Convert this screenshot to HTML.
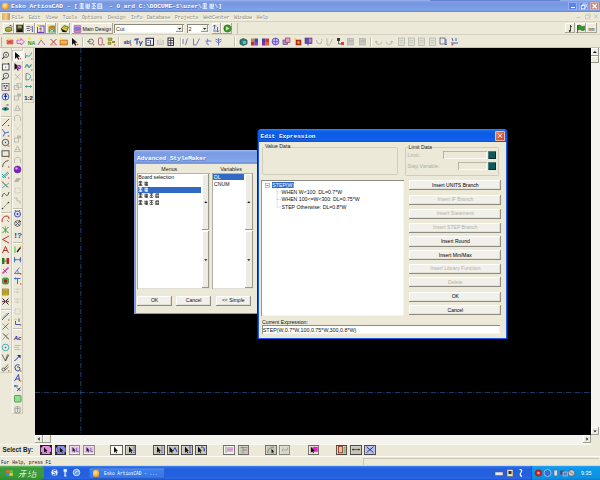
<!DOCTYPE html><html><head><meta charset="utf-8"><style>html,body{margin:0;padding:0;width:600px;height:480px;overflow:hidden;background:#ECE9D8}div,svg{position:absolute;box-sizing:border-box}</style></head><body>
<div style="left:0px;top:0px;width:600px;height:12px;background:linear-gradient(#9BB6F1 0px,#809EE4 1.5px,#7896E0 4px,#7A9FE6 8px,#7EA6EA 10px,#6F8AD2 11.5px,#6F8AD2 12px)"></div>
<div style="left:430px;top:0px;width:130px;height:1.3px;background:#6482D0"></div>
<div style="left:2px;top:2.5px;width:6.5px;height:6.5px;background:radial-gradient(circle at 40% 40%,#FFE9A8,#F0A830 60%,#C07010);border-radius:2px"></div>
<div style="left:11px;top:3.99px;font:bold 6.2px/6.82px 'Liberation Mono',monospace;color:#FFFFFF;white-space:pre;text-shadow:0.5px 0.5px 0 #5670B8">Esko ArtiosCAD - [</div>
<div style="left:109px;top:3.99px;font:bold 6.2px/6.82px 'Liberation Mono',monospace;color:#FFFFFF;white-space:pre;text-shadow:0.5px 0.5px 0 #5670B8">- 0 ard C:\DOCUME~1\uzer\</div>
<div style="left:214.5px;top:3.99px;font:bold 6.2px/6.82px 'Liberation Mono',monospace;color:#FFFFFF;white-space:pre;text-shadow:0.5px 0.5px 0 #5670B8">\]</div>
<svg style="left:78.5px;top:3.3000000000000003px;" width="5.6" height="5.8" viewBox="0 0 5.6 5.8"><path d="M0.5 2.03 H5.20 M2.80 0.3 V5.40 M0.8 3.94 H4.80 M0.5 5.40 H5.20 M0.8 0.6 H4.80" stroke="#FFFFFF" stroke-width="0.75" fill="none"/></svg>
<svg style="left:84.7px;top:3.3000000000000003px;" width="5.6" height="5.8" viewBox="0 0 5.6 5.8"><path d="M1 0.5 V5.40 M2.80 0.5 V5.40 M1 2.03 H5.20 M4.80 0.5 V3.94 M1 3.94 H5.20 M1.5 5.40 H4.80" stroke="#FFFFFF" stroke-width="0.75" fill="none"/></svg>
<svg style="left:90.9px;top:3.3000000000000003px;" width="5.6" height="5.8" viewBox="0 0 5.6 5.8"><path d="M0.5 0.6 H5.20 M2.80 0.6 V5.40 M0.5 3.94 L2.80 2.03 L5.20 3.94 M0.8 5.40 H4.80" stroke="#FFFFFF" stroke-width="0.75" fill="none"/></svg>
<svg style="left:97.1px;top:3.3000000000000003px;" width="5.6" height="5.8" viewBox="0 0 5.6 5.8"><path d="M0.8 0.8 V5.40 M0.8 0.8 H4.80 V5.40 M0.8 2.03 H4.80 M0.8 3.94 H4.80 M0.5 5.40 H5.20" stroke="#FFFFFF" stroke-width="0.75" fill="none"/></svg>
<svg style="left:202.3px;top:3.3000000000000003px;" width="5.6" height="5.8" viewBox="0 0 5.6 5.8"><path d="M0.5 2.03 H5.20 M2.80 0.3 V5.40 M0.8 3.94 H4.80 M0.5 5.40 H5.20 M0.8 0.6 H4.80" stroke="#FFFFFF" stroke-width="0.75" fill="none"/></svg>
<svg style="left:208.5px;top:3.3000000000000003px;" width="5.6" height="5.8" viewBox="0 0 5.6 5.8"><path d="M1 0.5 V5.40 M2.80 0.5 V5.40 M1 2.03 H5.20 M4.80 0.5 V3.94 M1 3.94 H5.20 M1.5 5.40 H4.80" stroke="#FFFFFF" stroke-width="0.75" fill="none"/></svg>
<div style="left:568px;top:1.7px;width:9.200000000000045px;height:8.3px;background:#5C84E8;border-radius:1.5px;box-shadow:inset 0 0 0 0.6px rgba(255,255,255,0.6)"></div>
<div style="left:578.7px;top:1.7px;width:9.200000000000045px;height:8.3px;background:#5C84E8;border-radius:1.5px;box-shadow:inset 0 0 0 0.6px rgba(255,255,255,0.6)"></div>
<div style="left:589.6px;top:1.7px;width:9.200000000000045px;height:8.3px;background:#C9867A;border-radius:1.5px;box-shadow:inset 0 0 0 0.6px rgba(255,255,255,0.6)"></div>
<div style="left:570.5px;top:7px;width:4.0px;height:1.1999999999999993px;background:#fff"></div>
<svg style="left:578.7px;top:1.7px;" width="9.2" height="8.3" viewBox="0 0 9.2 8.3"><rect x="2.3" y="3.6" width="3.6" height="3.2" fill="none" stroke="#fff" stroke-width="0.9"/><path d="M3.8 3.6 V2 H7.2 V5.2 H5.9" stroke="#fff" stroke-width="0.8" fill="none"/></svg>
<svg style="left:589.6px;top:1.7px;" width="9.2" height="8.3" viewBox="0 0 9.2 8.3"><path d="M2.5 2 L6.7 6.3 M6.7 2 L2.5 6.3" stroke="#fff" stroke-width="1.3"/></svg>
<div style="left:0px;top:12px;width:600px;height:9px;background:#ECE9D8"></div>
<div style="left:2px;top:13px;width:7.5px;height:7px;background:linear-gradient(90deg,#D8B060,#F0D090,#C89040);border-radius:1px"></div>
<div style="left:11.7px;top:16.29px;font:normal 5.3px/5.83px 'Liberation Mono',monospace;color:#8E8C80;white-space:pre;text-shadow:0.6px 0.6px 0 #FFFFFF;letter-spacing:-0.25px">File</div>
<div style="left:28.7px;top:16.29px;font:normal 5.3px/5.83px 'Liberation Mono',monospace;color:#8E8C80;white-space:pre;text-shadow:0.6px 0.6px 0 #FFFFFF;letter-spacing:-0.25px">Edit</div>
<div style="left:45.7px;top:16.29px;font:normal 5.3px/5.83px 'Liberation Mono',monospace;color:#8E8C80;white-space:pre;text-shadow:0.6px 0.6px 0 #FFFFFF;letter-spacing:-0.25px">View</div>
<div style="left:62.5px;top:16.29px;font:normal 5.3px/5.83px 'Liberation Mono',monospace;color:#8E8C80;white-space:pre;text-shadow:0.6px 0.6px 0 #FFFFFF;letter-spacing:-0.25px">Tools</div>
<div style="left:81.7px;top:16.29px;font:normal 5.3px/5.83px 'Liberation Mono',monospace;color:#8E8C80;white-space:pre;text-shadow:0.6px 0.6px 0 #FFFFFF;letter-spacing:-0.25px">Options</div>
<div style="left:107.8px;top:16.29px;font:normal 5.3px/5.83px 'Liberation Mono',monospace;color:#8E8C80;white-space:pre;text-shadow:0.6px 0.6px 0 #FFFFFF;letter-spacing:-0.25px">Design</div>
<div style="left:130.7px;top:16.29px;font:normal 5.3px/5.83px 'Liberation Mono',monospace;color:#8E8C80;white-space:pre;text-shadow:0.6px 0.6px 0 #FFFFFF;letter-spacing:-0.25px">Info</div>
<div style="left:146.7px;top:16.29px;font:normal 5.3px/5.83px 'Liberation Mono',monospace;color:#8E8C80;white-space:pre;text-shadow:0.6px 0.6px 0 #FFFFFF;letter-spacing:-0.25px">Database</div>
<div style="left:174.7px;top:16.29px;font:normal 5.3px/5.83px 'Liberation Mono',monospace;color:#8E8C80;white-space:pre;text-shadow:0.6px 0.6px 0 #FFFFFF;letter-spacing:-0.25px">Projects</div>
<div style="left:203.2px;top:16.29px;font:normal 5.3px/5.83px 'Liberation Mono',monospace;color:#8E8C80;white-space:pre;text-shadow:0.6px 0.6px 0 #FFFFFF;letter-spacing:-0.25px">WebCenter</div>
<div style="left:234px;top:16.29px;font:normal 5.3px/5.83px 'Liberation Mono',monospace;color:#8E8C80;white-space:pre;text-shadow:0.6px 0.6px 0 #FFFFFF;letter-spacing:-0.25px">Window</div>
<div style="left:256.5px;top:16.29px;font:normal 5.3px/5.83px 'Liberation Mono',monospace;color:#8E8C80;white-space:pre;text-shadow:0.6px 0.6px 0 #FFFFFF;letter-spacing:-0.25px">Help</div>
<svg style="left:574px;top:12px;" width="26" height="9" viewBox="0 0 26 9"><path d="M2.8 5.5 H6.3" stroke="#C2C0B4" stroke-width="0.9"/><rect x="11.5" y="3.2" width="3.6" height="3.6" fill="none" stroke="#CAC8BC" stroke-width="0.8"/><path d="M12.8 3.2 V2 H16.3 V5.5 H15.1" stroke="#CAC8BC" stroke-width="0.7" fill="none"/><path d="M20.3 2.6 L23.7 6.2 M23.7 2.6 L20.3 6.2" stroke="#C2C0B4" stroke-width="0.9"/></svg>
<div style="left:0px;top:20.5px;width:600px;height:0.6999999999999993px;background:#D6D2C2"></div>
<div style="left:0px;top:34.3px;width:600px;height:0.7000000000000028px;background:#D6D2C2"></div>
<div style="left:0px;top:47.3px;width:600px;height:0.7000000000000028px;background:#C8C4B4"></div>
<div style="left:1.5px;top:22px;width:55.5px;height:12px;background:#EFEDE3"></div>
<div style="left:3.0px;top:22.6px;width:10.6px;height:11.0px;box-shadow:inset -1px -1px 0 #A8A596, inset 1px 1px 0 #FFFFFF;background:#EEEBDD"></div>
<svg style="left:4.0px;top:23.6px;" width="9" height="9" viewBox="0 0 9 9"><path d="M1.5 4 Q4 2 7.5 3.5 L8 6.5 Q5 8.5 1.5 7 Z" fill="#9AA038" stroke="#4E5410" stroke-width="0.6"/><path d="M2.5 5 Q4.5 4 7 5" stroke="#C8D070" stroke-width="0.8" fill="none"/><path d="M5.5 1.5 Q7.5 1 8.3 2.8" stroke="#222" stroke-width="0.7" fill="none"/></svg>
<div style="left:13.7px;top:22.6px;width:10.599999999999998px;height:11.0px;box-shadow:inset -1px -1px 0 #A8A596, inset 1px 1px 0 #FFFFFF;background:#EEEBDD"></div>
<svg style="left:14.7px;top:23.6px;" width="9" height="9" viewBox="0 0 9 9"><rect x="1.5" y="1" width="6.5" height="7" fill="#3E3C18" stroke="#222" stroke-width="0.5"/><rect x="2.7" y="1.5" width="4" height="2.8" fill="#9CA060"/><rect x="2.5" y="6" width="4.5" height="2" fill="#111"/></svg>
<div style="left:24.4px;top:22.6px;width:10.600000000000001px;height:11.0px;box-shadow:inset -1px -1px 0 #A8A596, inset 1px 1px 0 #FFFFFF;background:#EEEBDD"></div>
<svg style="left:25.4px;top:23.6px;" width="9" height="9" viewBox="0 0 9 9"><path d="M1.5 2.5 H5 M1.5 4.5 H4.5 M2 6.5 H5" stroke="#606070" stroke-width="0.9"/><path d="M6 2.5 V4 M6 5 V6" stroke="#505060" stroke-width="0.8"/><path d="M7.5 2 V7.5" stroke="#3A4AA8" stroke-width="0.7"/><path d="M6.5 6.8 L7.5 8 L8.5 6.8" fill="#3A4AA8"/></svg>
<div style="left:35.099999999999994px;top:22.6px;width:10.600000000000001px;height:11.0px;box-shadow:inset -1px -1px 0 #A8A596, inset 1px 1px 0 #FFFFFF;background:#EEEBDD"></div>
<svg style="left:36.099999999999994px;top:23.6px;" width="9" height="9" viewBox="0 0 9 9"><rect x="1.5" y="2" width="6.5" height="6.5" fill="#F0E8F8" stroke="#7040C0" stroke-width="1"/><circle cx="2.2" cy="1.8" r="1.5" fill="#F0E040"/><circle cx="4.6" cy="4.8" r="1.3" fill="#A07840"/><path d="M3 7.5 Q4.6 5.5 6.5 7.5" fill="#806030"/></svg>
<div style="left:45.8px;top:22.6px;width:10.600000000000001px;height:11.0px;box-shadow:inset -1px -1px 0 #A8A596, inset 1px 1px 0 #FFFFFF;background:#EEEBDD"></div>
<svg style="left:46.8px;top:23.6px;" width="9" height="9" viewBox="0 0 9 9"><rect x="1.5" y="1.5" width="6.5" height="3.5" fill="#C09040"/><rect x="1.5" y="5" width="6.5" height="3.5" fill="#50A070"/><path d="M3 5.5 L6.5 8 M6.5 5.5 L3 8" stroke="#E0F0E0" stroke-width="0.8"/><circle cx="1.8" cy="1.8" r="1.4" fill="#F8E850"/><path d="M1.5 3 H8" stroke="#806020" stroke-width="0.5"/></svg>
<div style="left:56.5px;top:23px;width:0.7999999999999972px;height:10.5px;background:#C4C0AE"></div>
<div style="left:59.2px;top:22.6px;width:10.599999999999994px;height:11.0px;box-shadow:inset -1px -1px 0 #A8A596, inset 1px 1px 0 #FFFFFF;background:#EEEBDD"></div>
<svg style="left:60.2px;top:23.6px;" width="9" height="9" viewBox="0 0 9 9"><path d="M1 5 L4 1.5 L8.5 3 L6.5 7.5 Z" fill="#D8D030" stroke="#202010" stroke-width="0.6"/><path d="M1 5 L2.5 8 L6.5 8.3 L6.5 7.5 Z" fill="#111"/><path d="M3.5 3.5 L6.8 4.5" stroke="#807010" stroke-width="0.5"/></svg>
<div style="left:71.5px;top:22.6px;width:41.099999999999994px;height:11.0px;box-shadow:inset -1px -1px 0 #A8A596, inset 1px 1px 0 #FFFFFF;background:#EEEBDD"></div>
<svg style="left:72.5px;top:23.8px;" width="9" height="9" viewBox="0 0 9 9"><rect x="1" y="1.5" width="7" height="2" rx="0.8" fill="#D890E0" stroke="#8040A0" stroke-width="0.5"/><rect x="1" y="4" width="7" height="2" rx="0.8" fill="#9090F0" stroke="#4040A0" stroke-width="0.5"/><rect x="1" y="6.5" width="7" height="2" rx="0.8" fill="#E080C0" stroke="#8040A0" stroke-width="0.5"/></svg>
<div style="left:82.4px;top:26.74px;font:normal 5.2px/5.72px 'Liberation Sans',sans-serif;color:#111;white-space:pre;">Main Design</div>
<div style="left:113.9px;top:24.2px;width:69.9px;height:9.000000000000004px;background:#fff;box-shadow:inset 1px 1px 0 #8A887C, inset -0.8px -0.8px 0 #F4F3EE"></div>
<div style="left:116px;top:26.83px;font:normal 5.4px/5.94px 'Liberation Sans',sans-serif;color:#222;white-space:pre;">Cut</div>
<div style="left:176px;top:25px;width:7.300000000000011px;height:7.299999999999997px;background:#EEEDE5;box-shadow:inset -1px -1px 0 #9C9A8C, inset 1px 1px 0 #FFFFFF;"></div>
<svg style="left:176px;top:25px;" width="7.3" height="7.3" viewBox="0 0 7.3 7.3"><path d="M2 3 H5.3 L3.65 4.8 Z" fill="#222"/></svg>
<div style="left:186.9px;top:24.2px;width:21.799999999999983px;height:9.000000000000004px;background:#fff;box-shadow:inset 1px 1px 0 #8A887C, inset -0.8px -0.8px 0 #F4F3EE"></div>
<div style="left:188.5px;top:26.83px;font:normal 5.4px/5.94px 'Liberation Sans',sans-serif;color:#222;white-space:pre;">2</div>
<div style="left:201px;top:25px;width:7.199999999999989px;height:7.299999999999997px;background:#EEEDE5;box-shadow:inset -1px -1px 0 #9C9A8C, inset 1px 1px 0 #FFFFFF;"></div>
<svg style="left:201px;top:25px;" width="7.3" height="7.3" viewBox="0 0 7.3 7.3"><path d="M2 3 H5.3 L3.65 4.8 Z" fill="#222"/></svg>
<div style="left:211.6px;top:22.6px;width:9.099999999999994px;height:11.0px;box-shadow:inset -1px -1px 0 #A8A596, inset 1px 1px 0 #FFFFFF;background:#EEEBDD"></div>
<svg style="left:211.8px;top:23.6px;" width="9" height="9" viewBox="0 0 9 9"><path d="M2.5 1 V5 M1 2.5 L2.5 1 L4 2.5" stroke="#2850B0" stroke-width="0.8" fill="none"/><path d="M5.5 3 V8 M4 6.5 L5.5 8 L7 6.5" stroke="#2850B0" stroke-width="0.8" fill="none"/><rect x="1" y="5.5" width="3" height="2.5" fill="#B0B0B0"/></svg>
<div style="left:221.4px;top:22.6px;width:11.099999999999994px;height:11.0px;box-shadow:inset -1px -1px 0 #A8A596, inset 1px 1px 0 #FFFFFF;background:#EEEBDD"></div>
<svg style="left:222.5px;top:23.6px;" width="9" height="9" viewBox="0 0 9 9"><circle cx="4.5" cy="4.5" r="3.6" fill="#3A9A30" stroke="#1E5A18" stroke-width="0.6"/><path d="M3 2.5 L6.5 4.5 L3 6.5 Z" fill="#D0F0A0"/></svg>
<div style="left:236.5px;top:23px;width:0.8000000000000114px;height:10.5px;background:#C4C0AE"></div>
<div style="left:565.0px;top:23.4px;width:10.399999999999977px;height:9.800000000000004px;box-shadow:inset -1px -1px 0 #A8A596, inset 1px 1px 0 #FFFFFF;background:#EEEBDD"></div>
<svg style="left:565.8px;top:23.8px;" width="9" height="9" viewBox="0 0 9 9"><path d="M4.5 1 V7" stroke="#333" stroke-width="0.9"/><path d="M4.5 1.5 L6 3" stroke="#333" stroke-width="0.7"/><circle cx="3.8" cy="7" r="1" fill="#333"/></svg>
<div style="left:575.6px;top:23.4px;width:10.399999999999977px;height:9.800000000000004px;box-shadow:inset -1px -1px 0 #A8A596, inset 1px 1px 0 #FFFFFF;background:#EEEBDD"></div>
<svg style="left:576.4px;top:23.8px;" width="9" height="9" viewBox="0 0 9 9"><path d="M1.5 8.5 V1" stroke="#143" stroke-width="0.8"/><path d="M1.8 1.5 Q4 0.5 5 2 Q6.5 3 8.5 2 V6 Q6.5 7 5 6 Q3.5 5 1.8 6 Z" fill="#2E9A22" stroke="#185010" stroke-width="0.5"/></svg>
<div style="left:586.2px;top:23.4px;width:10.399999999999977px;height:9.800000000000004px;box-shadow:inset -1px -1px 0 #A8A596, inset 1px 1px 0 #FFFFFF;background:#EEEBDD"></div>
<svg style="left:587.0px;top:23.8px;" width="9" height="9" viewBox="0 0 9 9"><text x="4.5" y="6.5" font-family="Liberation Mono" font-size="5" text-anchor="middle" fill="#444">mm</text></svg>
<div style="left:0.8px;top:36.5px;width:0.8px;height:10.0px;background:#B8B4A4"></div>
<svg style="left:5.5px;top:37px;" width="9" height="9" viewBox="0 0 9 9"><path d="M1 3 H7 V7 H1 Z" fill="#F08080" stroke="#C02020" stroke-width="0.5"/><circle cx="2.5" cy="2" r="1.4" fill="#F8E050"/><path d="M2 5 H6" stroke="#A00" stroke-width="0.8"/></svg>
<svg style="left:16.3px;top:37px;" width="9" height="9" viewBox="0 0 9 9"><path d="M1 3 H5 L5 1.5 L8.5 5 L5 8 V6.5 H1 Z" fill="#F0D0F0" stroke="#B040B0" stroke-width="0.7"/><circle cx="2.5" cy="2" r="1.3" fill="#F8E050"/></svg>
<svg style="left:26.8px;top:37px;" width="9" height="9" viewBox="0 0 9 9"><circle cx="2.5" cy="1.8" r="1.3" fill="#F8E050"/><text x="4.5" y="8" font-family="Liberation Sans" font-weight="bold" font-size="5.3" text-anchor="middle" fill="#20A020">NA</text></svg>
<svg style="left:37.2px;top:37px;" width="9" height="9" viewBox="0 0 9 9"><path d="M1 8 L4 3 L8 8" stroke="#9040A0" stroke-width="0.8" fill="none"/><circle cx="4" cy="2" r="1.4" fill="#F8E050"/></svg>
<svg style="left:48.5px;top:37px;" width="9" height="9" viewBox="0 0 9 9"><path d="M1.5 2 L7.5 8 M7.5 2 L1.5 8" stroke="#D03030" stroke-width="1"/><path d="M1 8 H8" stroke="#E08080" stroke-width="0.6"/></svg>
<svg style="left:59.3px;top:37px;" width="9" height="9" viewBox="0 0 9 9"><rect x="1" y="3" width="7.5" height="5" fill="#F0A030" stroke="#905010" stroke-width="0.5"/><path d="M1.5 5 H8" stroke="#fff" stroke-width="0.5"/><circle cx="2" cy="2" r="1.3" fill="#F8E050"/></svg>
<svg style="left:69.7px;top:37px;" width="9" height="9" viewBox="0 0 9 9"><path d="M2 1 L2 8 L3.8 6.2 L5.2 8.8 L6.3 8.2 L5 5.8 L7.3 5.6 Z" fill="#111"/><circle cx="7.5" cy="7.5" r="0.8" fill="#E04030"/></svg>
<svg style="left:85.5px;top:37px;" width="9" height="9" viewBox="0 0 9 9"><circle cx="5" cy="4.5" r="2.4" fill="none" stroke="#555" stroke-width="0.8"/><path d="M1 4.5 H5" stroke="#C03030" stroke-width="0.7"/><circle cx="7.5" cy="7.8" r="0.8" fill="#E04030"/></svg>
<svg style="left:96.3px;top:37px;" width="9" height="9" viewBox="0 0 9 9"><rect x="2.5" y="1" width="3.8" height="7" rx="1.2" fill="#F4E0E0" stroke="#905050" stroke-width="0.8"/><circle cx="7.8" cy="7.8" r="0.8" fill="#E04030"/></svg>
<svg style="left:107.2px;top:37px;" width="9" height="9" viewBox="0 0 9 9"><rect x="1" y="1" width="4" height="2.5" fill="#B0B040" stroke="#606010" stroke-width="0.4"/><rect x="1" y="5" width="3" height="2.5" fill="#B0B040" stroke="#606010" stroke-width="0.4"/><rect x="5" y="4" width="3" height="2" fill="#909030"/><circle cx="7.8" cy="8" r="0.8" fill="#E04030"/></svg>
<svg style="left:123.0px;top:37px;" width="9" height="9" viewBox="0 0 9 9"><text x="4.3" y="7" font-family="Liberation Sans" font-weight="bold" font-size="5" text-anchor="middle" fill="#2030A0">abl</text><circle cx="7.8" cy="8" r="0.8" fill="#E04030"/></svg>
<svg style="left:133.8px;top:37px;" width="9" height="9" viewBox="0 0 9 9"><path d="M1 2 H5 M3 2 V7.5 M1 2 V3.5" stroke="#2030B0" stroke-width="1.1" fill="none"/><path d="M5 4 L6.5 7 M8.5 4 L6 9" stroke="#2030B0" stroke-width="1" fill="none"/></svg>
<svg style="left:144.7px;top:37px;" width="9" height="9" viewBox="0 0 9 9"><rect x="1" y="1.3" width="7.5" height="7" fill="#F0F0F8" stroke="#202040" stroke-width="1"/><path d="M2.2 3.3 H4.5 M5.5 3 V7.5" stroke="#202040" stroke-width="0.8"/><path d="M2.2 5.5 H4.5" stroke="#6070C0" stroke-width="0.7"/></svg>
<svg style="left:155.5px;top:37px;" width="9" height="9" viewBox="0 0 9 9"><rect x="1.5" y="3.5" width="6" height="4" fill="#D8D8D0" stroke="#B0B0A8" stroke-width="0.5"/><rect x="3" y="1" width="3" height="3" fill="#E0E0D8"/></svg>
<svg style="left:166.3px;top:37px;" width="9" height="9" viewBox="0 0 9 9"><rect x="2" y="1" width="5.5" height="7.5" fill="#F0F0F8" stroke="#202030" stroke-width="0.9"/><path d="M2.5 3.5 H7 M2.5 6 H7 M4.7 1.5 V8" stroke="#202030" stroke-width="0.8"/></svg>
<svg style="left:180.5px;top:37px;" width="9" height="9" viewBox="0 0 9 9"><path d="M2 2 V7 M6.5 1.5 L4.5 8" stroke="#5060C8" stroke-width="0.8"/></svg>
<svg style="left:192.2px;top:37px;" width="9" height="9" viewBox="0 0 9 9"><path d="M1.5 1.5 V8 H4.5 M7.5 1.5 L4.5 7.5" stroke="#5060C8" stroke-width="0.8" fill="none"/></svg>
<svg style="left:203.8px;top:37px;" width="9" height="9" viewBox="0 0 9 9"><path d="M1.5 4 H7.5 M3 1.5 Q5 3 3 5 Q1.5 7 5 8" stroke="#5060C8" stroke-width="0.8" fill="none"/></svg>
<svg style="left:213.8px;top:37px;" width="9" height="9" viewBox="0 0 9 9"><path d="M4.5 1 V8.5 M1.5 2 Q4.5 5 7.5 2 M1.5 4 L4.5 6 L7.5 4" stroke="#5060C8" stroke-width="0.8" fill="none"/></svg>
<svg style="left:238.8px;top:37px;" width="9" height="9" viewBox="0 0 9 9"><path d="M1 3 L4 1.5 L8 3 V7 L4 8.5 L1 7 Z" fill="#308080" stroke="#103838" stroke-width="0.6"/><rect x="4" y="4" width="3" height="3" fill="#60C0C0"/></svg>
<svg style="left:249.7px;top:37px;" width="9" height="9" viewBox="0 0 9 9"><rect x="1" y="1.5" width="3.5" height="3.5" fill="#E08020"/><rect x="4.5" y="1.5" width="3.5" height="3.5" fill="#3050C0"/><rect x="1" y="5" width="3.5" height="3.5" fill="#C03030"/><rect x="4.5" y="5" width="3.5" height="3.5" fill="#8050C0"/></svg>
<svg style="left:260.5px;top:37px;" width="9" height="9" viewBox="0 0 9 9"><rect x="1" y="1.5" width="3.5" height="3.5" fill="#4040A0"/><rect x="4.5" y="1.5" width="3.5" height="3.5" fill="#D03040"/><rect x="1" y="5" width="3.5" height="3.5" fill="#8030A0"/><rect x="4.5" y="5" width="3.5" height="3.5" fill="#E06040"/></svg>
<svg style="left:271.3px;top:37px;" width="9" height="9" viewBox="0 0 9 9"><circle cx="4.5" cy="4.5" r="3.4" fill="#C0B0F0" stroke="#4030A0" stroke-width="0.7"/><path d="M1.5 4.5 H7.5 M4.5 1.2 V7.8" stroke="#4030A0" stroke-width="0.5"/></svg>
<svg style="left:282.2px;top:37px;" width="9" height="9" viewBox="0 0 9 9"><rect x="1" y="3" width="4.5" height="4.5" fill="#B090D0" stroke="#503070" stroke-width="0.6"/><rect x="3.5" y="1" width="4.5" height="4.5" fill="#E0A0C0" stroke="#803060" stroke-width="0.6"/></svg>
<svg style="left:293.0px;top:37px;" width="9" height="9" viewBox="0 0 9 9"><circle cx="2" cy="2" r="1.3" fill="#F0E060"/><rect x="3" y="3" width="5" height="5" fill="#D03020" stroke="#602010" stroke-width="0.5"/><rect x="4.5" y="4.5" width="2" height="2" fill="#F0C020"/></svg>
<svg style="left:303.8px;top:37px;" width="9" height="9" viewBox="0 0 9 9"><rect x="1" y="1" width="7" height="5.5" fill="#6050B0" stroke="#302060" stroke-width="0.5"/><rect x="5" y="1.5" width="2.5" height="4" fill="#E070C0"/><path d="M4 6.5 V8.5" stroke="#302060" stroke-width="0.8"/></svg>
<svg style="left:314.7px;top:37px;" width="9" height="9" viewBox="0 0 9 9"><path d="M1.5 3 Q1.5 7 4.5 7 Q7 7 6.5 4 M6 2 L7.5 3.5" stroke="#A8A8A0" stroke-width="0.8" fill="none"/></svg>
<svg style="left:324.5px;top:37px;" width="9" height="9" viewBox="0 0 9 9"><path d="M2 1.5 V8 H5 M7.5 2 L5 7" stroke="#A8A8A0" stroke-width="0.8" fill="none"/></svg>
<svg style="left:335.5px;top:37px;" width="9" height="9" viewBox="0 0 9 9"><rect x="1" y="1" width="3" height="3" fill="#333"/><path d="M2.5 4 V7 H6" stroke="#333" stroke-width="0.7" fill="none"/><rect x="5" y="5" width="3" height="3" fill="#E04040"/></svg>
<svg style="left:346.3px;top:37px;" width="9" height="9" viewBox="0 0 9 9"><rect x="1.5" y="1.5" width="6" height="6.5" fill="#C8C8C0" stroke="#A8A8A0" stroke-width="0.6"/><path d="M2.5 4 H7" stroke="#999" stroke-width="0.6"/></svg>
<svg style="left:357.5px;top:37px;" width="9" height="9" viewBox="0 0 9 9"><rect x="1.5" y="1.5" width="6" height="6.5" fill="#C8C8C0" stroke="#A8A8A0" stroke-width="0.6"/><path d="M2.5 4 H7" stroke="#999" stroke-width="0.6"/></svg>
<svg style="left:373.9px;top:37px;" width="9" height="9" viewBox="0 0 9 9"><path d="M2 4 Q2 7.5 5 7.5 Q8 7.5 8 4.5 M2 4 L1 5.5 M2 4 L3.5 5" stroke="#B0B0A8" stroke-width="0.8" fill="none"/></svg>
<svg style="left:384.9px;top:37px;" width="9" height="9" viewBox="0 0 9 9"><path d="M7 4 Q7 7.5 4 7.5 Q1 7.5 1 4.5 M7 4 L8 5.5 M7 4 L5.5 5" stroke="#B0B0A8" stroke-width="0.8" fill="none"/></svg>
<svg style="left:396.5px;top:37px;" width="9" height="9" viewBox="0 0 9 9"><rect x="1.5" y="1" width="6" height="7.5" fill="#E0E0D8" stroke="#A8A8A0" stroke-width="0.6"/><path d="M2.5 3.5 H6.5 M2.5 5.5 H6.5" stroke="#B0B0A8" stroke-width="0.5"/></svg>
<svg style="left:407.0px;top:37px;" width="9" height="9" viewBox="0 0 9 9"><rect x="1.5" y="1" width="6" height="7.5" fill="#E0E0D8" stroke="#A8A8A0" stroke-width="0.6"/><path d="M2.5 3.5 H6.5 M2.5 5.5 H6.5" stroke="#B0B0A8" stroke-width="0.5"/></svg>
<svg style="left:417.0px;top:37px;" width="9" height="9" viewBox="0 0 9 9"><rect x="1.5" y="1" width="6" height="7.5" fill="#E0E0D8" stroke="#A8A8A0" stroke-width="0.6"/><path d="M2.5 3.5 H6.5 M2.5 5.5 H6.5" stroke="#B0B0A8" stroke-width="0.5"/></svg>
<svg style="left:428.1px;top:37px;" width="9" height="9" viewBox="0 0 9 9"><rect x="1.5" y="1" width="6" height="7.5" fill="#E0E0D8" stroke="#A8A8A0" stroke-width="0.6"/><path d="M2.5 3.5 H6.5 M2.5 5.5 H6.5" stroke="#B0B0A8" stroke-width="0.5"/></svg>
<svg style="left:439.1px;top:37px;" width="9" height="9" viewBox="0 0 9 9"><rect x="1" y="1" width="5" height="6" fill="#E8E8F0" stroke="#303050" stroke-width="0.6"/><path d="M7 2 V8 M6 7 L7 8 L8 7" stroke="#2040A0" stroke-width="0.7" fill="none"/></svg>
<svg style="left:450.1px;top:37px;" width="9" height="9" viewBox="0 0 9 9"><path d="M2 1 L3 4 M6 1 V4 M1 6 H8" stroke="#2040A0" stroke-width="0.8"/><circle cx="2.5" cy="7.5" r="1" fill="#E04040"/></svg>
<div style="left:82px;top:36.5px;width:0.7999999999999972px;height:10.0px;background:#C4C0AE"></div>
<div style="left:82.8px;top:36.5px;width:0.6000000000000085px;height:10.0px;background:#FFFFFF"></div>
<div style="left:118.3px;top:36.5px;width:0.7999999999999972px;height:10.0px;background:#C4C0AE"></div>
<div style="left:119.1px;top:36.5px;width:0.6000000000000085px;height:10.0px;background:#FFFFFF"></div>
<div style="left:180px;top:36.5px;width:0.8000000000000114px;height:10.0px;background:#C4C0AE"></div>
<div style="left:180.8px;top:36.5px;width:0.5999999999999943px;height:10.0px;background:#FFFFFF"></div>
<div style="left:234.2px;top:36.5px;width:0.8000000000000114px;height:10.0px;background:#C4C0AE"></div>
<div style="left:235.0px;top:36.5px;width:0.5999999999999943px;height:10.0px;background:#FFFFFF"></div>
<div style="left:370px;top:36.5px;width:0.8000000000000114px;height:10.0px;background:#C4C0AE"></div>
<div style="left:370.8px;top:36.5px;width:0.5999999999999659px;height:10.0px;background:#FFFFFF"></div>
<div style="left:34.7px;top:47.6px;width:556.3px;height:387.4px;background:#000"></div>
<svg style="left:34.7px;top:47.6px" width="556.3" height="387.4" viewBox="0 0 556.3 387.4"><path d="M45.8 0 V387.4" stroke="#2E5A94" stroke-width="0.7" stroke-dasharray="5 1.5 1 1.5"/><path d="M0 344.6 H556.3" stroke="#2E5A94" stroke-width="0.7" stroke-dasharray="5 1.5 1 1.5"/></svg>
<div style="left:591px;top:47.6px;width:9px;height:387.4px;background:#F4F3EE"></div>
<div style="left:591.3px;top:47.8px;width:7.7000000000000455px;height:7.800000000000004px;background:#ECEBE4;box-shadow:inset -1px -1px 0 #9A988A, inset 1px 1px 0 #FFFFFF;"></div>
<svg style="left:591.3px;top:47.8px;" width="7.7" height="7.8" viewBox="0 0 7.7 7.8"><path d="M1.9 4.9 H5.8 L3.85 3 Z" fill="#111"/></svg>
<div style="left:591.3px;top:55.6px;width:7.7000000000000455px;height:7.899999999999999px;background:#ECEBE4;box-shadow:inset -1px -1px 0 #9A988A, inset 1px 1px 0 #FFFFFF;"></div>
<div style="left:591.3px;top:426.5px;width:8.0px;height:8.5px;background:#ECEBE4;box-shadow:inset -1px -1px 0 #A09E90, inset 1px 1px 0 #FFFFFF;"></div>
<svg style="left:591.3px;top:426.5px;" width="8" height="8.5" viewBox="0 0 8 8.5"><path d="M2.3 3.5 H5.7 L4 5.3 Z" fill="#111"/></svg>
<div style="left:34.7px;top:435px;width:556.3px;height:8.5px;background:#F4F3EE"></div>
<div style="left:35px;top:435.3px;width:7.5px;height:8.0px;background:#ECEBE4;box-shadow:inset -1px -1px 0 #A09E90, inset 1px 1px 0 #FFFFFF;"></div>
<svg style="left:35px;top:435.3px;" width="7.5" height="8" viewBox="0 0 7.5 8"><path d="M4.6 2.3 V5.7 L2.8 4 Z" fill="#111"/></svg>
<div style="left:42.5px;top:435.3px;width:8.200000000000003px;height:8.0px;background:#ECEBE4;box-shadow:inset -1px -1px 0 #A09E90, inset 1px 1px 0 #FFFFFF;"></div>
<div style="left:583px;top:435.3px;width:8px;height:8.0px;background:#ECEBE4;box-shadow:inset -1px -1px 0 #A09E90, inset 1px 1px 0 #FFFFFF;"></div>
<svg style="left:583px;top:435.3px;" width="8" height="8" viewBox="0 0 8 8"><path d="M3.4 2.3 V5.7 L5.2 4 Z" fill="#111"/></svg>
<div style="left:0px;top:48px;width:11.5px;height:324.5px;box-shadow:inset -0.6px -0.6px 0 #B8B4A4, inset 0.6px 0 0 #fff"></div>
<div style="left:11.8px;top:48px;width:11.2px;height:366px;box-shadow:inset -0.6px -0.6px 0 #B8B4A4, inset 0.6px 0 0 #fff"></div>
<div style="left:23.2px;top:48px;width:11.3px;height:54.5px;box-shadow:inset -0.6px -0.6px 0 #B8B4A4, inset 0.6px 0 0 #fff"></div>
<svg style="left:1.4000000000000004px;top:50.9px;" width="9" height="9" viewBox="0 0 9 9"><circle cx="5" cy="3.8" r="2.6" fill="#F8F8F8" stroke="#333" stroke-width="0.8"/><path d="M3.2 5.8 L1.2 8" stroke="#333" stroke-width="1.1"/><path d="M3.9 3.8 H6.1 M5 2.7 V4.9" stroke="#333" stroke-width="0.5"/></svg>
<svg style="left:1.4000000000000004px;top:61.5px;" width="9" height="9" viewBox="0 0 9 9"><rect x="1.5" y="2" width="6.5" height="6" fill="#F4F4F4" stroke="#333" stroke-width="0.8"/><circle cx="4.7" cy="5" r="0.6" fill="#333"/><circle cx="7.5" cy="1.8" r="0.7" fill="#333"/></svg>
<svg style="left:1.4000000000000004px;top:71.5px;" width="9" height="9" viewBox="0 0 9 9"><circle cx="5" cy="3.8" r="2.6" fill="#F8F8F8" stroke="#333" stroke-width="0.8"/><path d="M3.2 5.8 L1.2 8" stroke="#333" stroke-width="1.1"/><path d="M3.9 3.8 H6.1" stroke="#333" stroke-width="0.5"/></svg>
<svg style="left:1.4000000000000004px;top:81.8px;" width="9" height="9" viewBox="0 0 9 9"><rect x="1" y="1.5" width="7" height="7" fill="#E8E8E8" stroke="#444" stroke-width="0.6"/><rect x="2.5" y="3" width="1.6" height="1.6" fill="#444"/><rect x="5" y="3" width="1.6" height="1.6" fill="#444"/><rect x="3.7" y="5.3" width="1.6" height="1.6" fill="#444"/><circle cx="7.8" cy="8" r="0.8" fill="#E04030"/></svg>
<svg style="left:1.4000000000000004px;top:92.3px;" width="9" height="9" viewBox="0 0 9 9"><circle cx="4.5" cy="4.8" r="3.3" fill="#E8F0FF" stroke="#2040A0" stroke-width="0.8"/><path d="M4.5 2 V7.5 M3 5 L4.5 3 L6 5" stroke="#1030C0" stroke-width="1"/></svg>
<svg style="left:1.4000000000000004px;top:102.8px;" width="9" height="9" viewBox="0 0 9 9"><path d="M1 6 Q4.5 2.5 8 6 Q4.5 9 1 6 Z" fill="#30A0A0" stroke="#185858" stroke-width="0.5"/><circle cx="4.5" cy="6" r="1" fill="#103030"/><path d="M5.5 1 L7.5 3 M7.5 1 L5.5 3" stroke="#333" stroke-width="0.5"/></svg>
<svg style="left:1.4000000000000004px;top:117.5px;" width="9" height="9" viewBox="0 0 9 9"><path d="M1 8 L8 1" stroke="#333" stroke-width="0.8"/><circle cx="7.5" cy="7.5" r="0.8" fill="#E04030"/></svg>
<svg style="left:1.4000000000000004px;top:127.9px;" width="9" height="9" viewBox="0 0 9 9"><path d="M1 1 L4 5 L8 4 M4 5 L2 8.5" stroke="#2050B0" stroke-width="0.8" fill="none"/><circle cx="7.5" cy="8" r="0.8" fill="#E04030"/></svg>
<svg style="left:1.4000000000000004px;top:138.3px;" width="9" height="9" viewBox="0 0 9 9"><circle cx="4.5" cy="4.5" r="3.2" fill="none" stroke="#333" stroke-width="0.8"/><circle cx="4.5" cy="4.5" r="0.7" fill="#333"/><circle cx="7.8" cy="8" r="0.7" fill="#E04030"/></svg>
<svg style="left:1.4000000000000004px;top:148.7px;" width="9" height="9" viewBox="0 0 9 9"><rect x="1" y="1.8" width="7" height="5.5" fill="none" stroke="#333" stroke-width="0.8"/><circle cx="7.8" cy="8" r="0.7" fill="#E04030"/></svg>
<svg style="left:1.4000000000000004px;top:159.1px;" width="9" height="9" viewBox="0 0 9 9"><path d="M1.5 8 Q2 2.5 7.5 1.5" stroke="#333" stroke-width="0.8" fill="none"/><circle cx="7.8" cy="8" r="0.7" fill="#E04030"/></svg>
<svg style="left:1.4000000000000004px;top:169.5px;" width="9" height="9" viewBox="0 0 9 9"><path d="M1 7 L7 2 M2 8 L8 3 M1 4 L5 8" stroke="#30A8A8" stroke-width="1"/><circle cx="7.8" cy="8" r="0.7" fill="#E04030"/></svg>
<svg style="left:1.4000000000000004px;top:179.9px;" width="9" height="9" viewBox="0 0 9 9"><path d="M1 1.5 L7 7.5" stroke="#222" stroke-width="0.8"/><path d="M1 8 L8 3" stroke="#40B0B0" stroke-width="0.9"/></svg>
<svg style="left:1.4000000000000004px;top:190.3px;" width="9" height="9" viewBox="0 0 9 9"><path d="M1 7 Q2.5 1.5 4.5 4.5 Q6.5 7.5 8 2" stroke="#333" stroke-width="0.8" fill="none"/></svg>
<svg style="left:1.4000000000000004px;top:200.7px;" width="9" height="9" viewBox="0 0 9 9"><path d="M1 8 L8 1" stroke="#333" stroke-width="0.7" stroke-dasharray="1.5 1"/><circle cx="1.5" cy="7.5" r="0.8" fill="#333"/><circle cx="7.5" cy="1.5" r="0.8" fill="#333"/></svg>
<svg style="left:1.4000000000000004px;top:214.2px;" width="9" height="9" viewBox="0 0 9 9"><path d="M1 8 Q1 2 6 2 Q8 2 8 5" stroke="#C02020" stroke-width="0.9" fill="none"/><path d="M6 6 L8 8" stroke="#30A030" stroke-width="0.8"/></svg>
<svg style="left:1.4000000000000004px;top:224.5px;" width="9" height="9" viewBox="0 0 9 9"><path d="M1.5 2 L7.5 8 M7.5 2 L1.5 8" stroke="#209020" stroke-width="0.9"/><path d="M4.5 1 V8" stroke="#C03030" stroke-width="0.5"/></svg>
<svg style="left:1.4000000000000004px;top:234.9px;" width="9" height="9" viewBox="0 0 9 9"><path d="M8 1 L1.5 4.5 L8 8" stroke="#C02020" stroke-width="0.9" fill="none"/></svg>
<svg style="left:1.4000000000000004px;top:245.2px;" width="9" height="9" viewBox="0 0 9 9"><path d="M1.5 8 L4.5 1.5 L7.5 8 M2.8 5.5 H6.2" stroke="#B02020" stroke-width="0.9" fill="none"/></svg>
<svg style="left:1.4000000000000004px;top:255.5px;" width="9" height="9" viewBox="0 0 9 9"><rect x="1" y="2" width="2.5" height="6" fill="#208020"/><rect x="5.5" y="2" width="2.5" height="6" fill="#C02020"/><path d="M3.5 5 H5.5" stroke="#333" stroke-width="0.8"/></svg>
<svg style="left:1.4000000000000004px;top:265.8px;" width="9" height="9" viewBox="0 0 9 9"><path d="M1.5 7.5 L7.5 1.5" stroke="#E040A0" stroke-width="1.6"/><path d="M2 3 L6 7" stroke="#8040A0" stroke-width="0.7"/></svg>
<svg style="left:1.4000000000000004px;top:276.2px;" width="9" height="9" viewBox="0 0 9 9"><rect x="1.5" y="2" width="6" height="6" rx="1.5" fill="#50B050" stroke="#207020" stroke-width="0.6"/><rect x="3" y="3.5" width="3" height="3" fill="#A02020"/></svg>
<svg style="left:1.4000000000000004px;top:286.5px;" width="9" height="9" viewBox="0 0 9 9"><rect x="1.5" y="2" width="6" height="6" fill="#E8D020" stroke="#806010" stroke-width="0.6"/><path d="M2 4 H7 M2 6 H7" stroke="#333" stroke-width="0.6"/></svg>
<svg style="left:1.4000000000000004px;top:296.5px;" width="9" height="9" viewBox="0 0 9 9"><path d="M1.5 1.5 L7.5 7.5 M7.5 1.5 L1.5 7.5" stroke="#222" stroke-width="1"/><path d="M1 4.5 H8" stroke="#D02020" stroke-width="1.2"/></svg>
<svg style="left:1.4000000000000004px;top:311.5px;" width="9" height="9" viewBox="0 0 9 9"><path d="M1 8 L8 1" stroke="#333" stroke-width="0.7"/><path d="M1 6.5 L6.5 1" stroke="#30A8A8" stroke-width="0.7"/><circle cx="7.8" cy="8" r="0.7" fill="#E04030"/></svg>
<svg style="left:1.4000000000000004px;top:321.8px;" width="9" height="9" viewBox="0 0 9 9"><path d="M1.5 1.5 L7.5 7.5" stroke="#40B0B0" stroke-width="0.9"/><path d="M7.5 1.5 L1.5 7.5" stroke="#333" stroke-width="0.7"/></svg>
<svg style="left:1.4000000000000004px;top:332.1px;" width="9" height="9" viewBox="0 0 9 9"><path d="M1.5 1.5 L7.5 7.5 M7.5 1.5 L1.5 7.5" stroke="#40B0B0" stroke-width="0.9"/><path d="M2.5 1.5 L8 7" stroke="#333" stroke-width="0.5"/></svg>
<svg style="left:1.4000000000000004px;top:342.5px;" width="9" height="9" viewBox="0 0 9 9"><circle cx="4.5" cy="4.5" r="3.3" fill="none" stroke="#40A8B0" stroke-width="0.9"/><circle cx="4.5" cy="4.5" r="0.8" fill="#2070A0"/></svg>
<svg style="left:1.4000000000000004px;top:352.5px;" width="9" height="9" viewBox="0 0 9 9"><path d="M1 1.5 L4.5 8 L8 1.5 M4.5 8 L6.5 1.5" stroke="#333" stroke-width="0.7" fill="none"/></svg>
<svg style="left:1.4000000000000004px;top:363.0px;" width="9" height="9" viewBox="0 0 9 9"><circle cx="2.5" cy="6.5" r="1.5" fill="none" stroke="#333" stroke-width="0.7"/><path d="M3.5 5.5 L7 1.5 M4 7 L7.5 4" stroke="#333" stroke-width="0.7"/><circle cx="7.8" cy="8" r="0.7" fill="#E04030"/></svg>
<div style="left:1px;top:116px;width:10px;height:0.5999999999999943px;background:#C4C0AE"></div>
<div style="left:1px;top:116.6px;width:10px;height:0.5px;background:#fff"></div>
<div style="left:1px;top:212px;width:10px;height:0.5999999999999943px;background:#C4C0AE"></div>
<div style="left:1px;top:212.6px;width:10px;height:0.5px;background:#fff"></div>
<div style="left:1px;top:309px;width:10px;height:0.6000000000000227px;background:#C4C0AE"></div>
<div style="left:1px;top:309.6px;width:10px;height:0.5px;background:#fff"></div>
<div style="left:12.3px;top:50px;width:10.3px;height:11px;background:#FBFAF6;box-shadow:inset 0.6px 0.6px 0 #A8A596, inset -0.6px -0.6px 0 #fff"></div>
<svg style="left:12.899999999999999px;top:51.0px;" width="9" height="9" viewBox="0 0 9 9"><path d="M2 1 L2 8 L3.8 6.2 L5.2 8.8 L6.3 8.2 L5 5.8 L7.3 5.6 Z" fill="#111"/><circle cx="7.5" cy="7.8" r="0.8" fill="#E04030"/></svg>
<svg style="left:12.899999999999999px;top:61.5px;" width="9" height="9" viewBox="0 0 9 9"><path d="M1.5 1 L1.5 8 L3.3 6.2 L4.7 8.8 L5.8 8.2 L4.5 5.8 L6.8 5.6 Z" fill="#111"/><circle cx="6" cy="5" r="2.3" fill="#A040C0"/><path d="M5 4 L7.5 6" stroke="#fff" stroke-width="0.5"/></svg>
<svg style="left:12.899999999999999px;top:71.5px;" width="9" height="9" viewBox="0 0 9 9"><path d="M2 2 L7 7.5 M7 2 L2 7.5" stroke="#AEAB9F" stroke-width="0.7"/></svg>
<svg style="left:12.899999999999999px;top:81.8px;" width="9" height="9" viewBox="0 0 9 9"><rect x="1.5" y="3.5" width="4" height="4" fill="none" stroke="#AEAB9F" stroke-width="0.7"/><rect x="4" y="1.5" width="4" height="4" fill="none" stroke="#AEAB9F" stroke-width="0.7"/></svg>
<svg style="left:12.899999999999999px;top:92.3px;" width="9" height="9" viewBox="0 0 9 9"><rect x="1.5" y="4" width="4" height="4" fill="none" stroke="#AEAB9F" stroke-width="0.7"/><rect x="4" y="1.5" width="4" height="3" fill="#BDBAAE"/></svg>
<svg style="left:12.899999999999999px;top:102.8px;" width="9" height="9" viewBox="0 0 9 9"><path d="M1.5 7.5 L4.5 2 L7.5 7.5 Z" fill="none" stroke="#AEAB9F" stroke-width="0.7"/><path d="M2.5 5.5 H6.5" stroke="#AEAB9F" stroke-width="0.5"/></svg>
<svg style="left:12.899999999999999px;top:113.2px;" width="9" height="9" viewBox="0 0 9 9"><path d="M1.5 8 L1.5 4 Q4 0.5 7.5 4 V8" fill="none" stroke="#AEAB9F" stroke-width="0.7"/></svg>
<svg style="left:12.899999999999999px;top:123.5px;" width="9" height="9" viewBox="0 0 9 9"><path d="M1.5 1.5 L7.5 7.5 M7.5 1.5 L1.5 7.5" stroke="#B8B5A8" stroke-width="0.6" stroke-dasharray="1 0.8"/></svg>
<svg style="left:12.899999999999999px;top:133.8px;" width="9" height="9" viewBox="0 0 9 9"><rect x="1.5" y="4" width="4" height="4" fill="none" stroke="#AEAB9F" stroke-width="0.7"/><rect x="4" y="1.5" width="4" height="3" fill="#BDBAAE"/></svg>
<svg style="left:12.899999999999999px;top:144.0px;" width="9" height="9" viewBox="0 0 9 9"><path d="M1.5 7.5 L4.5 2 L7.5 7.5 Z" fill="none" stroke="#AEAB9F" stroke-width="0.7"/><path d="M2.5 5.5 H6.5" stroke="#AEAB9F" stroke-width="0.5"/></svg>
<svg style="left:12.899999999999999px;top:154.5px;" width="9" height="9" viewBox="0 0 9 9"><path d="M1.5 8 L1.5 4 Q4 0.5 7.5 4 V8" fill="none" stroke="#AEAB9F" stroke-width="0.7"/></svg>
<svg style="left:12.899999999999999px;top:164.9px;" width="9" height="9" viewBox="0 0 9 9"><circle cx="4.5" cy="4.5" r="3.5" fill="#8020C0" stroke="#401070" stroke-width="0.4"/><circle cx="3.5" cy="3.5" r="1.3" fill="#D0A0F0"/><path d="M1 4.5 H8" stroke="#E03060" stroke-width="0.6"/></svg>
<svg style="left:12.899999999999999px;top:175.5px;" width="9" height="9" viewBox="0 0 9 9"><path d="M1 6 L3.5 2 H8 L5.5 6 Z" fill="#B8B5A8"/></svg>
<svg style="left:12.899999999999999px;top:185.5px;" width="9" height="9" viewBox="0 0 9 9"><rect x="2" y="2" width="5" height="5" fill="none" stroke="#AEAB9F" stroke-width="0.6" stroke-dasharray="1 0.8"/></svg>
<svg style="left:12.899999999999999px;top:195.8px;" width="9" height="9" viewBox="0 0 9 9"><path d="M1 2 H4 V5 H7 V8" stroke="#AEAB9F" stroke-width="0.7" fill="none"/></svg>
<svg style="left:12.899999999999999px;top:209.0px;" width="9" height="9" viewBox="0 0 9 9"><circle cx="4.5" cy="5" r="3" fill="#E0E0F8" stroke="#3040A0" stroke-width="0.9"/><path d="M2 2 L3 0.8 M7 2 L6 0.8" stroke="#3040A0" stroke-width="0.8"/><circle cx="4.5" cy="5" r="1" fill="#3040A0"/></svg>
<svg style="left:12.899999999999999px;top:219.0px;" width="9" height="9" viewBox="0 0 9 9"><circle cx="4.5" cy="4.5" r="2.8" fill="none" stroke="#333" stroke-width="0.7"/><path d="M2.5 2.5 L6.5 6.5 M6.5 2.5 L2.5 6.5" stroke="#333" stroke-width="0.7"/><path d="M6 1 L8 3" stroke="#222" stroke-width="0.8"/></svg>
<svg style="left:12.899999999999999px;top:229.5px;" width="9" height="9" viewBox="0 0 9 9"><text x="5" y="8" font-family="Liberation Sans" font-weight="bold" font-size="8" text-anchor="middle" fill="#2040B0">!?</text></svg>
<svg style="left:12.899999999999999px;top:244.5px;" width="9" height="9" viewBox="0 0 9 9"><path d="M2 1.5 V8" stroke="#40C040" stroke-width="1"/><path d="M4 7 L7.5 2.5" stroke="#222" stroke-width="1.3"/><path d="M7 2 L8 1" stroke="#E0A020" stroke-width="1"/></svg>
<svg style="left:12.899999999999999px;top:255.0px;" width="9" height="9" viewBox="0 0 9 9"><path d="M1.5 2 V7.5 M7.5 2 V7.5 M1.5 4.7 H7.5 M2.5 3.7 L1.5 4.7 L2.5 5.7 M6.5 3.7 L7.5 4.7 L6.5 5.7" stroke="#2050C0" stroke-width="0.7" fill="none"/></svg>
<svg style="left:12.899999999999999px;top:265.5px;" width="9" height="9" viewBox="0 0 9 9"><path d="M1.5 7.5 L6.5 1.5 M1.5 7.5 H8 M4 4 Q5.5 5 5.2 7.5" stroke="#2050C0" stroke-width="0.7" fill="none"/><circle cx="7.8" cy="8" r="0.7" fill="#E04030"/></svg>
<svg style="left:12.899999999999999px;top:275.5px;" width="9" height="9" viewBox="0 0 9 9"><path d="M1.5 2.5 H7.5 M4.5 2.5 V8 M2.5 1.5 L1.5 2.5 L2.5 3.5" stroke="#2050C0" stroke-width="0.8" fill="none"/><circle cx="7.8" cy="8" r="0.7" fill="#E04030"/></svg>
<svg style="left:12.899999999999999px;top:285.5px;" width="9" height="9" viewBox="0 0 9 9"><path d="M1.5 3 H7.5 M4.5 3 V8 M1.5 6 H7.5" stroke="#B8B5A8" stroke-width="0.7" stroke-dasharray="1 0.7"/></svg>
<svg style="left:12.899999999999999px;top:296.0px;" width="9" height="9" viewBox="0 0 9 9"><path d="M1.5 3 H7.5 M4.5 3 V8 M1.5 6 H7.5" stroke="#B8B5A8" stroke-width="0.7" stroke-dasharray="1 0.7"/></svg>
<svg style="left:12.899999999999999px;top:306.5px;" width="9" height="9" viewBox="0 0 9 9"><rect x="2" y="2" width="5" height="5" fill="none" stroke="#AEAB9F" stroke-width="0.6" stroke-dasharray="1 0.8"/></svg>
<svg style="left:12.899999999999999px;top:316.5px;" width="9" height="9" viewBox="0 0 9 9"><circle cx="2.5" cy="2.5" r="1.3" fill="#E8E040"/><path d="M2.5 4 V7.5 H7.5 M6 1.5 V5" stroke="#2050C0" stroke-width="0.9" fill="none"/><circle cx="7.8" cy="8" r="0.7" fill="#E04030"/></svg>
<svg style="left:12.899999999999999px;top:332.5px;" width="9" height="9" viewBox="0 0 9 9"><text x="4.5" y="7.3" font-family="Liberation Sans" font-weight="bold" font-style="italic" font-size="6" text-anchor="middle" fill="#1830A0">Ac</text></svg>
<svg style="left:12.899999999999999px;top:342.5px;" width="9" height="9" viewBox="0 0 9 9"><path d="M1.5 2.5 H7.5 M1.5 4.5 H6 M1.5 6.5 H7.5" stroke="#AEAB9F" stroke-width="0.7"/></svg>
<svg style="left:12.899999999999999px;top:352.5px;" width="9" height="9" viewBox="0 0 9 9"><path d="M1.5 8 L7 2.5" stroke="#1830A0" stroke-width="1"/><path d="M4 2 H7.5 V5.5 Z" fill="#1830A0"/></svg>
<svg style="left:12.899999999999999px;top:362.5px;" width="9" height="9" viewBox="0 0 9 9"><path d="M6.5 2 Q2 1 2 4.5 Q2 8 5 8 Q7.5 8 7 5 Q6.5 3.5 4 4" stroke="#2040A0" stroke-width="0.9" fill="none"/><circle cx="7.8" cy="8" r="0.7" fill="#E04030"/></svg>
<svg style="left:12.899999999999999px;top:372.8px;" width="9" height="9" viewBox="0 0 9 9"><path d="M1.5 8 L5.5 1.5 L6.5 8 M3 6 H6.5" stroke="#2040A0" stroke-width="0.9" fill="none"/><circle cx="7.8" cy="8" r="0.7" fill="#E04030"/></svg>
<svg style="left:12.899999999999999px;top:383.5px;" width="9" height="9" viewBox="0 0 9 9"><path d="M1.5 2 H5 M2.5 1 L1.5 2 L2.5 3 M4 7 L7.5 3.5 M4 3.5 L7.5 7" stroke="#1830A0" stroke-width="0.9" fill="none"/></svg>
<svg style="left:12.899999999999999px;top:394.2px;" width="9" height="9" viewBox="0 0 9 9"><rect x="1.5" y="1.5" width="6.5" height="6.5" rx="0.8" fill="#90E090" stroke="#308030" stroke-width="0.7"/></svg>
<svg style="left:12.899999999999999px;top:404.5px;" width="9" height="9" viewBox="0 0 9 9"><path d="M2 3 V7.5 M7 3 V7.5 M2 7.5 Q4.5 8.5 7 7.5 M4.5 2 V7" stroke="#888" stroke-width="0.8" fill="none"/><ellipse cx="4.5" cy="2.5" rx="2.5" ry="1" fill="none" stroke="#888" stroke-width="0.6"/></svg>
<div style="left:12.5px;top:208px;width:9.8px;height:0.5999999999999943px;background:#C4C0AE"></div>
<div style="left:12.5px;top:208.6px;width:9.8px;height:0.5px;background:#fff"></div>
<div style="left:12.5px;top:242px;width:9.8px;height:0.5999999999999943px;background:#C4C0AE"></div>
<div style="left:12.5px;top:242.6px;width:9.8px;height:0.5px;background:#fff"></div>
<div style="left:12.5px;top:328px;width:9.8px;height:0.6000000000000227px;background:#C4C0AE"></div>
<div style="left:12.5px;top:328.6px;width:9.8px;height:0.5px;background:#fff"></div>
<svg style="left:24.3px;top:51.0px;" width="9" height="9" viewBox="0 0 9 9"><path d="M1.5 7 Q2 3 4 5 Q6 6.5 7.5 1.5" stroke="#30A0A0" stroke-width="0.9" fill="none"/><path d="M1.5 2 V7" stroke="#444" stroke-width="0.4"/><circle cx="7.8" cy="8" r="0.7" fill="#E04030"/></svg>
<svg style="left:24.3px;top:61.5px;" width="9" height="9" viewBox="0 0 9 9"><path d="M1 6 L3 2 L5 6 L7.5 2" stroke="#30A0A0" stroke-width="0.9" fill="none"/><path d="M1 4 H8" stroke="#444" stroke-width="0.4"/><circle cx="7.8" cy="8" r="0.7" fill="#E04030"/></svg>
<svg style="left:24.3px;top:71.8px;" width="9" height="9" viewBox="0 0 9 9"><path d="M2 1.5 Q6.5 1.5 6.5 4.5 Q6.5 8 2 8" stroke="#30A0A0" stroke-width="0.9" fill="none"/><path d="M2 1.5 V8" stroke="#444" stroke-width="0.6"/><circle cx="7.8" cy="8" r="0.7" fill="#E04030"/></svg>
<svg style="left:24.3px;top:82.0px;" width="9" height="9" viewBox="0 0 9 9"><path d="M1 4.5 H8" stroke="#444" stroke-width="0.6"/><path d="M1 4.5 L3 3 V6 Z M8 4.5 L6 3 V6 Z" fill="#30A0A0"/></svg>
<svg style="left:24.3px;top:92.5px;" width="9" height="9" viewBox="0 0 9 9"><text x="4.5" y="7.3" font-family="Liberation Sans" font-weight="bold" font-size="6" text-anchor="middle" fill="#222">1:2</text></svg>
<div style="left:0px;top:443.6px;width:591px;height:0.7999999999999545px;background:#F8F7F0"></div>
<div style="left:2.6px;top:446.94px;font:bold 6.3px/6.93px 'Liberation Sans',sans-serif;color:#1A1A1A;white-space:pre;">Select By:</div>
<div style="left:40px;top:445.4px;width:12px;height:9.300000000000011px;background:#E889E8;box-shadow:inset 0 0 0 0.9px #2A2A2A, inset 1.5px 1.5px 0 rgba(255,255,255,0.55)"></div>
<svg style="left:40px;top:445.4px;" width="12" height="9.300000000000011" viewBox="0 0 12 9.300000000000011"><rect x="1.3" y="1.2" width="9.4" height="6.9" fill="#E889E8"/><path d="M4 2.2 V7.6 L5.3 6.4 L6.2 8 L6.9 7.6 L6.1 6 L7.6 5.9 Z" fill="#111"/><circle cx="1.5" cy="1.5" r="0.9" fill="#111"/><circle cx="10.5" cy="1.5" r="0.9" fill="#111"/><circle cx="1.5" cy="7.8" r="0.9" fill="#111"/><circle cx="10.5" cy="7.8" r="0.9" fill="#111"/></svg>
<div style="left:54.5px;top:445.4px;width:11.799999999999997px;height:9.300000000000011px;background:#8C8CE0;box-shadow:inset 0 0 0 0.9px #2A2A2A, inset 1.5px 1.5px 0 rgba(255,255,255,0.55)"></div>
<svg style="left:54.5px;top:445.4px;" width="11.799999999999997" height="9.300000000000011" viewBox="0 0 11.799999999999997 9.300000000000011"><rect x="1.3" y="1.2" width="9.2" height="6.9" fill="#8C8CE0"/><path d="M4.8 2.2 V7.6 L6.1 6.4 L7 8 L7.7 7.6 L6.9 6 L8.4 5.9 Z" fill="#111"/><path d="M2 2 L3.5 7" stroke="#222" stroke-width="0.5"/><circle cx="1.5" cy="1.5" r="0.9" fill="#111"/><circle cx="10.3" cy="1.5" r="0.9" fill="#111"/><circle cx="1.5" cy="7.8" r="0.9" fill="#111"/><circle cx="10.3" cy="7.8" r="0.9" fill="#111"/></svg>
<div style="left:68.7px;top:445.4px;width:11.299999999999997px;height:9.300000000000011px;background:#F4F3EE;box-shadow:inset 0 0 0 0.9px #8A887C, inset 1.5px 1.5px 0 rgba(255,255,255,0.55)"></div>
<svg style="left:68.7px;top:445.4px;" width="11.299999999999997" height="9.300000000000011" viewBox="0 0 11.299999999999997 9.300000000000011"><rect x="1.5" y="1.5" width="8.3" height="6.3" fill="#E8B8F0"/><path d="M3.5 2 V7 L4.6 6 L5.4 7.4 L6 7.1 L5.3 5.7 L6.6 5.6 Z" fill="#222"/><path d="M7.5 3 V6.5 H9.5" stroke="#2040A0" stroke-width="0.6" fill="none"/></svg>
<div style="left:82.5px;top:445.4px;width:12.0px;height:9.300000000000011px;background:#F4F3EE;box-shadow:inset 0 0 0 0.9px #8A887C, inset 1.5px 1.5px 0 rgba(255,255,255,0.55)"></div>
<svg style="left:82.5px;top:445.4px;" width="12.0" height="9.300000000000011" viewBox="0 0 12.0 9.300000000000011"><rect x="1.5" y="1.5" width="9" height="6.3" fill="#E8B8F0"/><path d="M3.5 2 V7 L4.6 6 L5.4 7.4 L6 7.1 L5.3 5.7 L6.6 5.6 Z" fill="#222"/><path d="M7.8 3 V6.5 H10" stroke="#2040A0" stroke-width="0.6" fill="none"/></svg>
<div style="left:110px;top:445.4px;width:12.5px;height:9.300000000000011px;background:#F6F5F0;box-shadow:inset 0 0 0 0.9px #5A5850, inset 1.5px 1.5px 0 rgba(255,255,255,0.55)"></div>
<svg style="left:110px;top:445.4px;" width="12.5" height="9.300000000000011" viewBox="0 0 12.5 9.300000000000011"><path d="M4 1.6 V7.8 L5.4 6.5 L6.4 8.3 L7.2 7.9 L6.3 6.2 L7.9 6.1 Z" fill="#111"/></svg>
<div style="left:124.5px;top:445.4px;width:11.800000000000011px;height:9.300000000000011px;background:#C6C4B8;box-shadow:inset 0 0 0 0.9px #4A4840, inset 1.5px 1.5px 0 rgba(255,255,255,0.55)"></div>
<svg style="left:124.5px;top:445.4px;" width="11.800000000000011" height="9.300000000000011" viewBox="0 0 11.800000000000011 9.300000000000011"><path d="M4 1.6 V7.8 L5.4 6.5 L6.4 8.3 L7.2 7.9 L6.3 6.2 L7.9 6.1 Z" fill="#111"/><path d="M9 1.5 V8" stroke="#2030C0" stroke-width="0.8" stroke-dasharray="1.2 0.6"/></svg>
<div style="left:153px;top:445.4px;width:12px;height:9.300000000000011px;background:#C6C4B8;box-shadow:inset 0 0 0 0.9px #4A4840, inset 1.5px 1.5px 0 rgba(255,255,255,0.55)"></div>
<svg style="left:153px;top:445.4px;" width="12" height="9.300000000000011" viewBox="0 0 12 9.300000000000011"><path d="M4 1.6 V7.8 L5.4 6.5 L6.4 8.3 L7.2 7.9 L6.3 6.2 L7.9 6.1 Z" fill="#111"/><path d="M9 1.5 V8" stroke="#2030C0" stroke-width="0.8" stroke-dasharray="1.2 0.6"/></svg>
<div style="left:167px;top:445.4px;width:11.699999999999989px;height:9.300000000000011px;background:#C6C4B8;box-shadow:inset 0 0 0 0.9px #4A4840, inset 1.5px 1.5px 0 rgba(255,255,255,0.55)"></div>
<svg style="left:167px;top:445.4px;" width="11.699999999999989" height="9.300000000000011" viewBox="0 0 11.699999999999989 9.300000000000011"><path d="M2.5 1.6 V7.8 L3.9 6.5 L4.9 8.3 L5.7 7.9 L4.8 6.2 L6.4 6.1 Z" fill="#111"/><path d="M5.5 7 L8 2.5 L10 7" stroke="#2040C0" stroke-width="1" fill="none"/></svg>
<div style="left:181.2px;top:445.4px;width:11.800000000000011px;height:9.300000000000011px;background:#C6C4B8;box-shadow:inset 0 0 0 0.9px #4A4840, inset 1.5px 1.5px 0 rgba(255,255,255,0.55)"></div>
<svg style="left:181.2px;top:445.4px;" width="11.800000000000011" height="9.300000000000011" viewBox="0 0 11.800000000000011 9.300000000000011"><path d="M4 1.6 V7.8 L5.4 6.5 L6.4 8.3 L7.2 7.9 L6.3 6.2 L7.9 6.1 Z" fill="#111"/><path d="M9 1.5 V8 M8 2.5 L9 1.5 L10 2.5 M8 7 L9 8 L10 7" stroke="#2030C0" stroke-width="0.6" fill="none"/></svg>
<div style="left:195px;top:445.4px;width:12px;height:9.300000000000011px;background:#C6C4B8;box-shadow:inset 0 0 0 0.9px #4A4840, inset 1.5px 1.5px 0 rgba(255,255,255,0.55)"></div>
<svg style="left:195px;top:445.4px;" width="12" height="9.300000000000011" viewBox="0 0 12 9.300000000000011"><path d="M3 1.6 V7.8 L4.4 6.5 L5.4 8.3 L6.2 7.9 L5.3 6.2 L6.9 6.1 Z" fill="#111"/><path d="M6 2 Q10 2 9.5 6 L8.3 5" stroke="#2040C0" stroke-width="1" fill="none"/></svg>
<div style="left:223.2px;top:445.4px;width:11.800000000000011px;height:9.300000000000011px;background:#F0EFEA;box-shadow:inset 0 0 0 0.9px #6E6C62, inset 1.5px 1.5px 0 rgba(255,255,255,0.55)"></div>
<svg style="left:223.2px;top:445.4px;" width="11.800000000000011" height="9.300000000000011" viewBox="0 0 11.800000000000011 9.300000000000011"><path d="M3 1.5 V8" stroke="#40A040" stroke-width="0.7"/><path d="M4 3 H10 M4 6 H10" stroke="#E050E0" stroke-width="0.9"/><path d="M4 4.5 H10" stroke="#40A040" stroke-width="0.6"/></svg>
<div style="left:237.5px;top:445.4px;width:11.699999999999989px;height:9.300000000000011px;background:#C6C4B8;box-shadow:inset 0 0 0 0.9px #6E6C62, inset 1.5px 1.5px 0 rgba(255,255,255,0.55)"></div>
<svg style="left:237.5px;top:445.4px;" width="11.699999999999989" height="9.300000000000011" viewBox="0 0 11.699999999999989 9.300000000000011"><path d="M2.5 2.5 H9.5 M5 1.5 V8" stroke="#40A040" stroke-width="0.6"/><path d="M5 5 H9" stroke="#E050E0" stroke-width="0.9"/></svg>
<div style="left:265px;top:445.4px;width:12px;height:9.300000000000011px;background:#C6C4B8;box-shadow:inset 0 0 0 0.9px #6E6C62, inset 1.5px 1.5px 0 rgba(255,255,255,0.55)"></div>
<svg style="left:265px;top:445.4px;" width="12" height="9.300000000000011" viewBox="0 0 12 9.300000000000011"><path d="M2.5 8 Q3 2 9 2" stroke="#50A060" stroke-width="0.9" fill="none"/><path d="M6.5 3.5 V8 L7.4 7.2 L8.1 8.4 L8.6 8.1 L8 6.9 L9 6.8 Z" fill="#111"/></svg>
<div style="left:278.7px;top:445.4px;width:11.800000000000011px;height:9.300000000000011px;background:#D8D6CC;box-shadow:inset 0 0 0 0.9px #8A887C, inset 1.5px 1.5px 0 rgba(255,255,255,0.55)"></div>
<svg style="left:278.7px;top:445.4px;" width="11.800000000000011" height="9.300000000000011" viewBox="0 0 11.800000000000011 9.300000000000011"><path d="M3 5 H8.5 V2.5 M3 5 L4.5 3.5 M3 5 L4.5 6.5" stroke="#A8A69C" stroke-width="0.8" fill="none"/></svg>
<div style="left:308px;top:445.4px;width:11.199999999999989px;height:9.300000000000011px;background:#E6E4DA;box-shadow:inset 0 0 0 0.9px #6E6C62, inset 1.5px 1.5px 0 rgba(255,255,255,0.55)"></div>
<svg style="left:308px;top:445.4px;" width="11.199999999999989" height="9.300000000000011" viewBox="0 0 11.199999999999989 9.300000000000011"><rect x="4.5" y="1.8" width="5.3" height="5" fill="#F020D0"/><path d="M2.8 1.6 V7.8 L4.2 6.5 L5.2 8.3 L6 7.9 L5.1 6.2 L6.7 6.1 Z" fill="#111"/></svg>
<div style="left:335.6px;top:445.4px;width:11.399999999999977px;height:9.300000000000011px;background:#C6C4B8;box-shadow:inset 0 0 0 0.9px #4A4840, inset 1.5px 1.5px 0 rgba(255,255,255,0.55)"></div>
<svg style="left:335.6px;top:445.4px;" width="11.399999999999977" height="9.300000000000011" viewBox="0 0 11.399999999999977 9.300000000000011"><rect x="2.5" y="1.5" width="4" height="6.3" fill="#E8C0A0" stroke="#903020" stroke-width="0.8"/><path d="M8.8 1.8 V8" stroke="#30A030" stroke-width="0.9" stroke-dasharray="1.2 0.6"/></svg>
<div style="left:349.6px;top:445.4px;width:12.0px;height:9.300000000000011px;background:#C6C4B8;box-shadow:inset 0 0 0 0.9px #4A4840, inset 1.5px 1.5px 0 rgba(255,255,255,0.55)"></div>
<svg style="left:349.6px;top:445.4px;" width="12.0" height="9.300000000000011" viewBox="0 0 12.0 9.300000000000011"><path d="M2 4.6 H10" stroke="#222" stroke-width="0.7"/><path d="M2 4.6 L3.5 3.6 V5.6 Z M10 4.6 L8.5 3.6 V5.6 Z" fill="#222"/></svg>
<div style="left:363.6px;top:445.4px;width:12.0px;height:9.300000000000011px;background:#B8C0F0;box-shadow:inset 0 0 0 0.9px #4A4840, inset 1.5px 1.5px 0 rgba(255,255,255,0.55)"></div>
<svg style="left:363.6px;top:445.4px;" width="12.0" height="9.300000000000011" viewBox="0 0 12.0 9.300000000000011"><rect x="1.5" y="1.3" width="9" height="6.8" fill="#B8C0F0"/><path d="M2.5 1.8 L9.5 7.6 M9.5 1.8 L2.5 7.6" stroke="#102060" stroke-width="0.8"/></svg>
<div style="left:0px;top:455.6px;width:600px;height:0.6999999999999886px;background:#DAD6C6"></div>
<div style="left:0px;top:456.3px;width:600px;height:0.5999999999999659px;background:#FBFAF5"></div>
<div style="left:363px;top:458px;width:236px;height:0.6999999999999886px;background:#C9C5B5"></div>
<div style="left:363px;top:458px;width:0.6999999999999886px;height:8px;background:#C9C5B5"></div>
<div style="left:1px;top:458.6px;font:normal 6.2px/7px 'Liberation Mono',monospace;color:#111;white-space:pre;transform:scaleX(0.75);transform-origin:0 0">For Help, press F1</div>
<div style="left:0px;top:465.2px;width:600px;height:0.9000000000000341px;background:#C8D8F0"></div>
<div style="left:0px;top:466.1px;width:600px;height:13.899999999999977px;background:linear-gradient(#3A86F4 0px,#2A6CE6 1.2px,#245EDC 3px,#2560E0 10px,#2A66E4 12.5px,#1E50C8 13.9px)"></div>
<div style="left:0px;top:466.1px;width:44.3px;height:13.899999999999977px;background:linear-gradient(#5EB85E 0px,#3C9A3C 2px,#3A9A38 10px,#308A30 14.3px);border-radius:0 4px 4px 0"></div>
<svg style="left:5px;top:468.8px;" width="8.5" height="8.5" viewBox="0 0 8.5 8.5"><path d="M0.8 1.6 Q2.5 0.6 4 1.5 V4 Q2.5 3.2 0.8 4 Z" fill="#F06030"/><path d="M4.4 1.6 Q6 0.6 7.8 1.4 V3.9 Q6 3.1 4.4 4 Z" fill="#70C040"/><path d="M0.8 4.4 Q2.5 3.5 4 4.4 V7 Q2.5 6.1 0.8 7 Z" fill="#3090F0"/><path d="M4.4 4.5 Q6 3.5 7.8 4.3 V6.9 Q6 6.1 4.4 7 Z" fill="#F8D030"/></svg>
<svg style="left:17px;top:468.6px;" width="20" height="9" viewBox="0 0 20 9"><g transform="skewX(-12) translate(1.5 0)"><path d="M3 1.5 H8.5 M2 4.5 H9 M6.3 1.5 L5.3 8.3 M4.3 4.5 Q3.6 7.3 1.5 8.3 M7 4.5 L6.8 8.3" stroke="#F4FFF0" stroke-width="0.65" fill="none"/><path d="M12 1.5 L11.3 4.8 L13.6 4.4 M10.8 8 L14.2 6.4 M16 1.3 L15 3.8 H19 M15.4 5.3 H18.8 V8.3 H15 Z" stroke="#F4FFF0" stroke-width="0.6" fill="none"/></g></svg>
<svg style="left:50px;top:468.3px;" width="9" height="9" viewBox="0 0 9 9"><circle cx="4.5" cy="4.5" r="3.5" fill="#F0F4FF" stroke="#3A6AD0" stroke-width="0.7"/><path d="M6 2.6 Q3 1.8 3.2 3.6 Q3.4 4.6 5.2 5 Q6.5 5.6 5.5 6.5 Q4 7.2 2.8 6.4" stroke="#2A5AC0" stroke-width="0.9" fill="none"/></svg>
<svg style="left:61px;top:468.3px;" width="8" height="9" viewBox="0 0 8 9"><rect x="2.5" y="1" width="3.5" height="3" fill="#F0F8FF" stroke="#5080D0" stroke-width="0.4"/><path d="M4.2 4 V8" stroke="#A0C8F8" stroke-width="2"/><path d="M3 8 H5.5" stroke="#fff" stroke-width="0.8"/></svg>
<svg style="left:72px;top:468.3px;" width="9" height="9" viewBox="0 0 9 9"><circle cx="4.5" cy="4.5" r="3.3" fill="#6A9AE8" stroke="#E0ECFF" stroke-width="0.8"/><path d="M2.8 5.5 Q4.5 2 6.8 3" stroke="#fff" stroke-width="0.7" fill="none"/></svg>
<div style="left:89.3px;top:467.8px;width:75.50000000000001px;height:10.800000000000011px;background:linear-gradient(#4A8EF8,#3A7CEE 30%,#3677EA 80%,#2F6AD8);border-radius:1.5px;box-shadow:inset 0 0 0 0.6px #2150B8, inset 0.9px 0.9px 0 rgba(255,255,255,0.25)"></div>
<div style="left:92.5px;top:470px;width:6.5px;height:6.5px;background:radial-gradient(circle at 40% 40%,#FFE9A8,#F0A830 60%,#C07010);border-radius:2px"></div>
<div style="left:104px;top:469.8px;font:normal 6.2px/7px Liberation Mono,monospace;color:#fff;white-space:pre;transform:scaleX(0.72);transform-origin:0 0">Esko ArtiosCAD - ...</div>
<div style="left:531px;top:466.3px;width:69px;height:13.699999999999989px;background:linear-gradient(#28A0F8 0px,#0C9AE8 2px,#1090E0 12px,#0A78D0 14.3px);box-shadow:inset 0.8px 0 0 #0E4CB8"></div>
<svg style="left:494px;top:468px;" width="10" height="10" viewBox="0 0 10 10"><rect x="1" y="4" width="8" height="3.5" fill="#E8E8E8" stroke="#555" stroke-width="0.5"/></svg>
<svg style="left:505px;top:468px;" width="10" height="10" viewBox="0 0 10 10"><rect x="2" y="1.5" width="6" height="7" fill="#E8E0C0" stroke="#555" stroke-width="0.5"/><rect x="3.5" y="3" width="3" height="3" fill="#333"/></svg>
<svg style="left:516px;top:468px;" width="10" height="10" viewBox="0 0 10 10"><path d="M3.5 1.5 Q7 1.5 5 4.5 Q3 7 6 8.5" stroke="#fff" stroke-width="1.2" fill="none"/></svg>
<svg style="left:534px;top:468px;" width="9" height="10" viewBox="0 0 9 10"><circle cx="4.5" cy="5" r="3.3" fill="#D02020" stroke="#801010" stroke-width="0.5"/><circle cx="4.5" cy="5" r="1.3" fill="#F0A0A0"/></svg>
<svg style="left:542.5px;top:468px;" width="9" height="10" viewBox="0 0 9 10"><circle cx="4.5" cy="5" r="3.5" fill="#3070D0" stroke="#D0E0FF" stroke-width="0.6"/></svg>
<svg style="left:551px;top:468px;" width="9" height="10" viewBox="0 0 9 10"><rect x="3" y="2" width="3.5" height="6" rx="1" fill="#D8D8E0" stroke="#555" stroke-width="0.5"/></svg>
<svg style="left:558.5px;top:468px;" width="9" height="10" viewBox="0 0 9 10"><rect x="1" y="2.5" width="4.5" height="4" fill="#405080"/><rect x="4" y="4" width="4.5" height="4" fill="#6080C0" stroke="#fff" stroke-width="0.4"/></svg>
<svg style="left:566.5px;top:468px;" width="9" height="10" viewBox="0 0 9 10"><circle cx="4.5" cy="5" r="3.3" fill="#C0C8D8" stroke="#333" stroke-width="0.5"/><path d="M3 3.5 L6 6.5" stroke="#333" stroke-width="0.6"/></svg>
<div style="left:581px;top:470.83px;font:normal 5.4px/5.94px 'Liberation Sans',sans-serif;color:#FFFFFF;white-space:pre;">9:35</div>
<div style="left:134.2px;top:150.3px;width:123.80000000000001px;height:164.0px;background:#7E9BE2;border-radius:3px 3px 0 0"></div>
<div style="left:134.2px;top:150.3px;width:123.80000000000001px;height:13.199999999999989px;background:linear-gradient(#A4BEF4 0px,#8CA8EA 1.2px,#7C9AE2 3px,#7FA2E8 9px,#82A8EC 11.5px,#7088D0 13.2px);border-radius:3px 3px 0 0"></div>
<div style="left:137px;top:155.84px;font:bold 6.1px/6.71px 'Liberation Mono',monospace;color:#FFFFFF;white-space:pre;text-shadow:0.5px 0.5px 0 #5E78C0">Advanced StyleMaker</div>
<div style="left:135.8px;top:163.5px;width:120.80000000000001px;height:149.3px;background:#ECE9D8"></div>
<div style="left:69.30000000000001px;top:166.69px;width:200px;text-align:center;font:normal 5.3px/5.83px 'Liberation Sans',sans-serif;color:#222;white-space:pre;">Menus</div>
<div style="left:131px;top:166.69px;width:200px;text-align:center;font:normal 5.3px/5.83px 'Liberation Sans',sans-serif;color:#222;white-space:pre;">Variables</div>
<div style="left:137px;top:173.3px;width:73.19999999999999px;height:115.69999999999999px;background:#fff;box-shadow:inset 0.8px 0.8px 0 #9C9A8C, inset -0.8px -0.8px 0 #D8D6CC"></div>
<div style="left:138.3px;top:175.34px;font:normal 5.2px/5.72px 'Liberation Sans',sans-serif;color:#111;white-space:pre;">Board selection</div>
<svg style="left:138.3px;top:181.2px;" width="4.8" height="5.0" viewBox="0 0 4.8 5.0"><path d="M0.5 1.75 H4.40 M2.40 0.3 V4.60 M0.8 3.40 H4.00 M0.5 4.60 H4.40 M0.8 0.6 H4.00" stroke="#222" stroke-width="0.7" fill="none"/></svg>
<svg style="left:143.70000000000002px;top:181.2px;" width="4.8" height="5.0" viewBox="0 0 4.8 5.0"><path d="M1 0.5 V4.60 M2.40 0.5 V4.60 M1 1.75 H4.40 M4.00 0.5 V3.40 M1 3.40 H4.40 M1.5 4.60 H4.00" stroke="#222" stroke-width="0.7" fill="none"/></svg>
<div style="left:137.8px;top:186.7px;width:63.0px;height:6.0px;background:#316AC5"></div>
<svg style="left:138.3px;top:187.2px;" width="4.8" height="5.0" viewBox="0 0 4.8 5.0"><path d="M0.5 1.75 H4.40 M2.40 0.3 V4.60 M0.8 3.40 H4.00 M0.5 4.60 H4.40 M0.8 0.6 H4.00" stroke="#FFFFFF" stroke-width="0.7" fill="none"/></svg>
<svg style="left:143.70000000000002px;top:187.2px;" width="4.8" height="5.0" viewBox="0 0 4.8 5.0"><path d="M1 0.5 V4.60 M2.40 0.5 V4.60 M1 1.75 H4.40 M4.00 0.5 V3.40 M1 3.40 H4.40 M1.5 4.60 H4.00" stroke="#FFFFFF" stroke-width="0.7" fill="none"/></svg>
<svg style="left:138.3px;top:193.2px;" width="4.8" height="5.0" viewBox="0 0 4.8 5.0"><path d="M0.5 1.75 H4.40 M2.40 0.3 V4.60 M0.8 3.40 H4.00 M0.5 4.60 H4.40 M0.8 0.6 H4.00" stroke="#222" stroke-width="0.7" fill="none"/></svg>
<svg style="left:143.70000000000002px;top:193.2px;" width="4.8" height="5.0" viewBox="0 0 4.8 5.0"><path d="M1 0.5 V4.60 M2.40 0.5 V4.60 M1 1.75 H4.40 M4.00 0.5 V3.40 M1 3.40 H4.40 M1.5 4.60 H4.00" stroke="#222" stroke-width="0.7" fill="none"/></svg>
<svg style="left:149.10000000000002px;top:193.2px;" width="4.8" height="5.0" viewBox="0 0 4.8 5.0"><path d="M0.5 0.6 H4.40 M2.40 0.6 V4.60 M0.5 3.40 L2.40 1.75 L4.40 3.40 M0.8 4.60 H4.00" stroke="#222" stroke-width="0.7" fill="none"/></svg>
<svg style="left:154.5px;top:193.2px;" width="4.8" height="5.0" viewBox="0 0 4.8 5.0"><path d="M0.8 0.8 V4.60 M0.8 0.8 H4.00 V4.60 M0.8 1.75 H4.00 M0.8 3.40 H4.00 M0.5 4.60 H4.40" stroke="#222" stroke-width="0.7" fill="none"/></svg>
<svg style="left:138.3px;top:199.5px;" width="4.8" height="5.0" viewBox="0 0 4.8 5.0"><path d="M0.5 1.75 H4.40 M2.40 0.3 V4.60 M0.8 3.40 H4.00 M0.5 4.60 H4.40 M0.8 0.6 H4.00" stroke="#222" stroke-width="0.7" fill="none"/></svg>
<svg style="left:143.70000000000002px;top:199.5px;" width="4.8" height="5.0" viewBox="0 0 4.8 5.0"><path d="M1 0.5 V4.60 M2.40 0.5 V4.60 M1 1.75 H4.40 M4.00 0.5 V3.40 M1 3.40 H4.40 M1.5 4.60 H4.00" stroke="#222" stroke-width="0.7" fill="none"/></svg>
<svg style="left:149.10000000000002px;top:199.5px;" width="4.8" height="5.0" viewBox="0 0 4.8 5.0"><path d="M0.5 0.6 H4.40 M2.40 0.6 V4.60 M0.5 3.40 L2.40 1.75 L4.40 3.40 M0.8 4.60 H4.00" stroke="#222" stroke-width="0.7" fill="none"/></svg>
<svg style="left:154.5px;top:199.5px;" width="4.8" height="5.0" viewBox="0 0 4.8 5.0"><path d="M0.8 0.8 V4.60 M0.8 0.8 H4.00 V4.60 M0.8 1.75 H4.00 M0.8 3.40 H4.00 M0.5 4.60 H4.40" stroke="#222" stroke-width="0.7" fill="none"/></svg>
<div style="left:201.7px;top:173.8px;width:7.600000000000023px;height:56.69999999999999px;background:#EDEBE3;box-shadow:inset -1px -1px 0 #9A988A, inset 1px 1px 0 #FFFFFF;"></div>
<svg style="left:201.7px;top:198px;" width="7.6" height="8" viewBox="0 0 7.6 8"><path d="M2.2 5 H5.4 L3.8 3.3 Z" fill="#111"/></svg>
<div style="left:201.7px;top:231.2px;width:7.600000000000023px;height:57.19999999999999px;background:#EDEBE3;box-shadow:inset -1px -1px 0 #9A988A, inset 1px 1px 0 #FFFFFF;"></div>
<svg style="left:201.7px;top:256px;" width="7.6" height="8" viewBox="0 0 7.6 8"><path d="M2.2 3.2 H5.4 L3.8 4.9 Z" fill="#111"/></svg>
<div style="left:212.3px;top:173.3px;width:40.89999999999998px;height:115.69999999999999px;background:#fff;box-shadow:inset 0.8px 0.8px 0 #9C9A8C, inset -0.8px -0.8px 0 #D8D6CC"></div>
<div style="left:213.3px;top:174.3px;width:30.69999999999999px;height:6.0px;background:#316AC5"></div>
<div style="left:214px;top:175.34px;font:normal 5.2px/5.72px 'Liberation Sans',sans-serif;color:#FFFFFF;white-space:pre;">DL</div>
<div style="left:214px;top:181.54px;font:normal 5.2px/5.72px 'Liberation Sans',sans-serif;color:#111;white-space:pre;">CNUM</div>
<div style="left:245px;top:173.8px;width:7.599999999999994px;height:56.69999999999999px;background:#EDEBE3;box-shadow:inset -1px -1px 0 #9A988A, inset 1px 1px 0 #FFFFFF;"></div>
<svg style="left:245px;top:198px;" width="7.6" height="8" viewBox="0 0 7.6 8"><path d="M2.2 5 H5.4 L3.8 3.3 Z" fill="#111"/></svg>
<div style="left:245px;top:231.2px;width:7.599999999999994px;height:57.19999999999999px;background:#EDEBE3;box-shadow:inset -1px -1px 0 #9A988A, inset 1px 1px 0 #FFFFFF;"></div>
<svg style="left:245px;top:256px;" width="7.6" height="8" viewBox="0 0 7.6 8"><path d="M2.2 3.2 H5.4 L3.8 4.9 Z" fill="#111"/></svg>
<div style="left:137px;top:295.5px;width:35.19999999999999px;height:10.100000000000023px;background:#F1F0EA;box-shadow:inset -0.9px -0.9px 0 #8E8C80, inset 0.9px 0.9px 0 #FFFFFF, inset -1.6px -1.6px 0 #D6D3C6"></div>
<div style="left:54.599999999999994px;top:298.27px;width:200px;text-align:center;font:normal 5.05px/5.56px 'Liberation Sans',sans-serif;color:#111;white-space:pre;">OK</div>
<div style="left:176px;top:295.5px;width:35.19999999999999px;height:10.100000000000023px;background:#F1F0EA;box-shadow:inset -0.9px -0.9px 0 #8E8C80, inset 0.9px 0.9px 0 #FFFFFF, inset -1.6px -1.6px 0 #D6D3C6"></div>
<div style="left:93.6px;top:298.27px;width:200px;text-align:center;font:normal 5.05px/5.56px 'Liberation Sans',sans-serif;color:#111;white-space:pre;">Cancel</div>
<div style="left:215.6px;top:295.5px;width:35.30000000000001px;height:10.100000000000023px;background:#F1F0EA;box-shadow:inset -0.9px -0.9px 0 #8E8C80, inset 0.9px 0.9px 0 #FFFFFF, inset -1.6px -1.6px 0 #D6D3C6"></div>
<div style="left:133.25px;top:298.27px;width:200px;text-align:center;font:normal 5.05px/5.56px 'Liberation Sans',sans-serif;color:#111;white-space:pre;">&lt;&lt; Simple</div>
<div style="left:257.3px;top:128.6px;width:250.7px;height:210.9px;background:#0A1E86;border-radius:3.5px 3.5px 0 0"></div>
<div style="left:258.1px;top:142px;width:249.09999999999997px;height:196.7px;background:#1C58E6"></div>
<div style="left:258.6px;top:142px;width:247.7px;height:196.3px;background:#6A90F0"></div>
<div style="left:257.6px;top:128.6px;width:249.89999999999998px;height:13.599999999999994px;background:linear-gradient(#3D8CF8 0px,#1C6CF0 1.2px,#0E5CE8 3px,#0A5CE8 8px,#1264EC 11px,#0A48D0 13.6px);border-radius:3.5px 3.5px 0 0"></div>
<div style="left:260.6px;top:133.65px;font:bold 6.1px/6.71px 'Liberation Mono',monospace;color:#FFFFFF;white-space:pre;text-shadow:0.5px 0.5px 0 #0A2E90">Edit Expression</div>
<div style="left:495.3px;top:131.3px;width:10.099999999999966px;height:9.399999999999977px;background:linear-gradient(135deg,#E89078,#D45A3C 55%,#C04828);border-radius:1.5px;box-shadow:inset 0 0 0 0.8px #F4D8D0"></div>
<svg style="left:495.3px;top:131.3px;" width="10.1" height="9.4" viewBox="0 0 10.1 9.4"><path d="M2.9 2.5 L7.2 6.9 M7.2 2.5 L2.9 6.9" stroke="#fff" stroke-width="1.0"/></svg>
<div style="left:259.1px;top:142.2px;width:246.59999999999997px;height:195.40000000000003px;background:#ECE9D8"></div>
<div style="left:261.7px;top:146.6px;width:136.10000000000002px;height:28.900000000000006px;border:0.8px solid #D0CDBE;border-radius:1.5px"></div>
<div style="left:264.3px;top:144px;width:23.69999999999999px;height:5px;background:#ECE9D8"></div>
<div style="left:265px;top:144.14px;font:normal 5.2px/5.72px 'Liberation Sans',sans-serif;color:#222;white-space:pre;">Value Data</div>
<div style="left:405px;top:146.6px;width:94px;height:29.0px;border:0.8px solid #D0CDBE;border-radius:1.5px"></div>
<div style="left:407.5px;top:144px;width:24.5px;height:5px;background:#ECE9D8"></div>
<div style="left:408.6px;top:144.54px;font:normal 5.2px/5.72px 'Liberation Sans',sans-serif;color:#222;white-space:pre;">Limit Data</div>
<div style="left:407.5px;top:153.24px;font:normal 5.2px/5.72px 'Liberation Sans',sans-serif;color:#B0AE9E;white-space:pre;">Limit:</div>
<div style="left:407.5px;top:163.94px;font:normal 5.2px/5.72px 'Liberation Sans',sans-serif;color:#B0AE9E;white-space:pre;">Step Variable:</div>
<div style="left:443px;top:150.5px;width:44px;height:8.5px;background:#ECE9D8;box-shadow:inset 0.8px 0.8px 0 #A8A696, inset -0.8px -0.8px 0 #FFFFFF"></div>
<div style="left:458.3px;top:161.8px;width:28.69999999999999px;height:8.399999999999977px;background:#ECE9D8;box-shadow:inset 0.8px 0.8px 0 #A8A696, inset -0.8px -0.8px 0 #FFFFFF"></div>
<div style="left:487.6px;top:150.5px;width:8.399999999999977px;height:8.5px;background:#0E5A5A;box-shadow:inset 0.7px 0.7px 0 #5A8A88, inset -0.8px -0.8px 0 #1A1A1A"></div>
<div style="left:487.6px;top:161.8px;width:8.399999999999977px;height:8.399999999999977px;background:#0E5A5A;box-shadow:inset 0.7px 0.7px 0 #5A8A88, inset -0.8px -0.8px 0 #1A1A1A"></div>
<div style="left:261px;top:179.6px;width:143.39999999999998px;height:136.00000000000003px;background:#FFFFFF;box-shadow:inset 0.9px 0.9px 0 #8E8C80, inset -0.9px -0.9px 0 #F4F3EE"></div>
<svg style="left:264.5px;top:182.5px;" width="5" height="5" viewBox="0 0 5 5"><rect x="0.5" y="0.5" width="4" height="4" fill="#fff" stroke="#9A9A9A" stroke-width="0.6"/><path d="M1.4 2.5 H3.6" stroke="#333" stroke-width="0.6"/></svg>
<div style="left:271.6px;top:181.7px;width:22.19999999999999px;height:6.5px;background:#316AC5"></div>
<div style="left:272.3px;top:182.94px;font:normal 5.2px/5.72px 'Liberation Sans',sans-serif;color:#FFFFFF;white-space:pre;">STEP(W)</div>
<svg style="left:276px;top:188px;" width="6" height="20" viewBox="0 0 6 20"><path d="M1 0 V19 M1 4 H5 M1 11.4 H5 M1 19 H5" stroke="#A0A0A0" stroke-width="0.6" stroke-dasharray="0.8 0.8"/></svg>
<div style="left:281.5px;top:190.04px;font:normal 5.2px/5.72px 'Liberation Sans',sans-serif;color:#111;white-space:pre;">WHEN W&lt;100: DL=0.7*W</div>
<div style="left:281.5px;top:197.44px;font:normal 5.2px/5.72px 'Liberation Sans',sans-serif;color:#111;white-space:pre;">WHEN 100&lt;=W&lt;300: DL=0.75*W</div>
<div style="left:281.5px;top:204.94px;font:normal 5.2px/5.72px 'Liberation Sans',sans-serif;color:#111;white-space:pre;">STEP Otherwise: DL=0.8*W</div>
<div style="left:409.2px;top:180.0px;width:92.30000000000001px;height:10.199999999999989px;background:#F1F0EA;box-shadow:inset -0.9px -0.9px 0 #8E8C80, inset 0.9px 0.9px 0 #FFFFFF, inset -1.6px -1.6px 0 #D6D3C6"></div>
<div style="left:355.35px;top:182.82px;width:200px;text-align:center;font:normal 5.05px/5.56px 'Liberation Sans',sans-serif;color:#000;white-space:pre;">Insert UNITS Branch</div>
<div style="left:409.2px;top:194.6px;width:92.30000000000001px;height:10.199999999999989px;background:#F1F0EA;box-shadow:inset -0.9px -0.9px 0 #8E8C80, inset 0.9px 0.9px 0 #FFFFFF, inset -1.6px -1.6px 0 #D6D3C6"></div>
<div style="left:355.35px;top:197.42px;width:200px;text-align:center;font:normal 5.05px/5.56px 'Liberation Sans',sans-serif;color:#B4B2A4;white-space:pre;">Insert IF Branch</div>
<div style="left:409.2px;top:208.5px;width:92.30000000000001px;height:10.199999999999989px;background:#F1F0EA;box-shadow:inset -0.9px -0.9px 0 #8E8C80, inset 0.9px 0.9px 0 #FFFFFF, inset -1.6px -1.6px 0 #D6D3C6"></div>
<div style="left:355.35px;top:211.32px;width:200px;text-align:center;font:normal 5.05px/5.56px 'Liberation Sans',sans-serif;color:#B4B2A4;white-space:pre;">Insert Statement</div>
<div style="left:409.2px;top:222.5px;width:92.30000000000001px;height:10.199999999999989px;background:#F1F0EA;box-shadow:inset -0.9px -0.9px 0 #8E8C80, inset 0.9px 0.9px 0 #FFFFFF, inset -1.6px -1.6px 0 #D6D3C6"></div>
<div style="left:355.35px;top:225.32px;width:200px;text-align:center;font:normal 5.05px/5.56px 'Liberation Sans',sans-serif;color:#B4B2A4;white-space:pre;">Insert STEP Branch</div>
<div style="left:409.2px;top:236.4px;width:92.30000000000001px;height:10.199999999999989px;background:#F1F0EA;box-shadow:inset -0.9px -0.9px 0 #8E8C80, inset 0.9px 0.9px 0 #FFFFFF, inset -1.6px -1.6px 0 #D6D3C6"></div>
<div style="left:355.35px;top:239.22px;width:200px;text-align:center;font:normal 5.05px/5.56px 'Liberation Sans',sans-serif;color:#000;white-space:pre;">Insert Round</div>
<div style="left:409.2px;top:249.9px;width:92.30000000000001px;height:10.200000000000017px;background:#F1F0EA;box-shadow:inset -0.9px -0.9px 0 #8E8C80, inset 0.9px 0.9px 0 #FFFFFF, inset -1.6px -1.6px 0 #D6D3C6"></div>
<div style="left:355.35px;top:252.72px;width:200px;text-align:center;font:normal 5.05px/5.56px 'Liberation Sans',sans-serif;color:#000;white-space:pre;">Insert Min/Max</div>
<div style="left:409.2px;top:263.5px;width:92.30000000000001px;height:10.199999999999989px;background:#F1F0EA;box-shadow:inset -0.9px -0.9px 0 #8E8C80, inset 0.9px 0.9px 0 #FFFFFF, inset -1.6px -1.6px 0 #D6D3C6"></div>
<div style="left:355.35px;top:266.32px;width:200px;text-align:center;font:normal 5.05px/5.56px 'Liberation Sans',sans-serif;color:#B4B2A4;white-space:pre;">Insert Library Function</div>
<div style="left:409.2px;top:277.3px;width:92.30000000000001px;height:10.199999999999989px;background:#F1F0EA;box-shadow:inset -0.9px -0.9px 0 #8E8C80, inset 0.9px 0.9px 0 #FFFFFF, inset -1.6px -1.6px 0 #D6D3C6"></div>
<div style="left:355.35px;top:280.12px;width:200px;text-align:center;font:normal 5.05px/5.56px 'Liberation Sans',sans-serif;color:#B4B2A4;white-space:pre;">Delete</div>
<div style="left:409.2px;top:291.5px;width:92.30000000000001px;height:10.199999999999989px;background:#F1F0EA;box-shadow:inset -0.9px -0.9px 0 #8E8C80, inset 0.9px 0.9px 0 #FFFFFF, inset -1.6px -1.6px 0 #D6D3C6"></div>
<div style="left:355.35px;top:294.32px;width:200px;text-align:center;font:normal 5.05px/5.56px 'Liberation Sans',sans-serif;color:#000;white-space:pre;">OK</div>
<div style="left:409.2px;top:305.2px;width:92.30000000000001px;height:10.199999999999989px;background:#F1F0EA;box-shadow:inset -0.9px -0.9px 0 #8E8C80, inset 0.9px 0.9px 0 #FFFFFF, inset -1.6px -1.6px 0 #D6D3C6"></div>
<div style="left:355.35px;top:308.02px;width:200px;text-align:center;font:normal 5.05px/5.56px 'Liberation Sans',sans-serif;color:#000;white-space:pre;">Cancel</div>
<div style="left:262px;top:320.14px;font:normal 5.2px/5.72px 'Liberation Sans',sans-serif;color:#111;white-space:pre;">Current Expression:</div>
<div style="left:261.7px;top:325.2px;width:238.10000000000002px;height:8.800000000000011px;background:#FFFFFF;box-shadow:inset 0.9px 0.9px 0 #8E8C80, inset -0.9px -0.9px 0 #F4F3EE"></div>
<div style="left:262.8px;top:327.56px;font:normal 5.35px/5.88px 'Liberation Sans',sans-serif;color:#111;white-space:pre;">STEP(W,0.7*W,100,0.75*W,300,0.8*W)</div>
</body></html>
